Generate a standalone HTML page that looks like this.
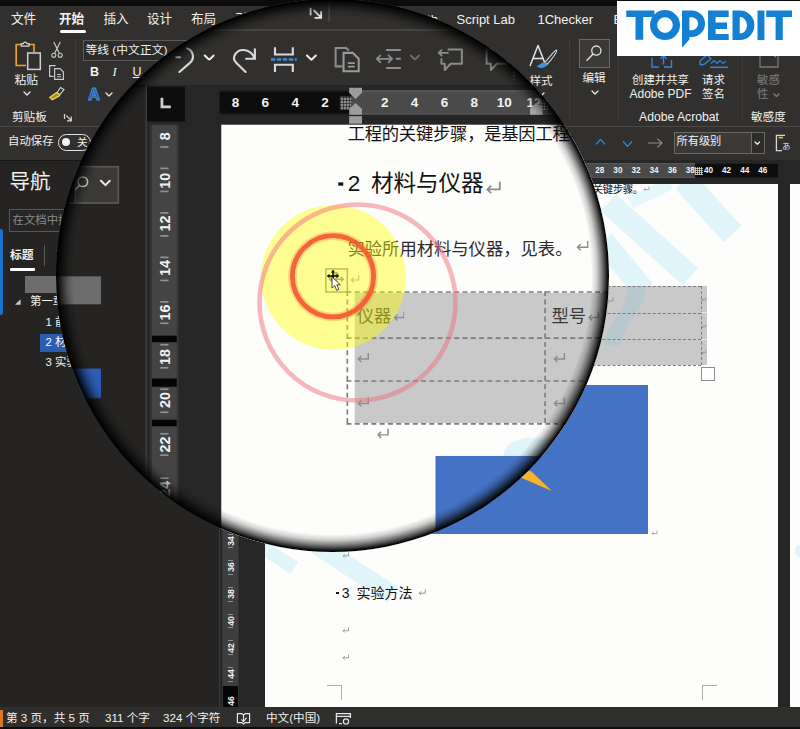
<!DOCTYPE html>
<html lang="zh-CN"><head><meta charset="utf-8"><title>Word - magnifier</title>
<style>
html,body{margin:0;padding:0;background:#262524;}
body{width:800px;height:729px;overflow:hidden;font-family:"Liberation Sans",sans-serif;}
.stage{position:relative;width:800px;height:729px;overflow:hidden;background:#262524;}
.ui{position:absolute;left:0;top:0;width:800px;height:729px;overflow:hidden;}
.b{position:absolute;display:block;box-sizing:border-box;}
.t{position:absolute;white-space:nowrap;display:block;}
.gt{color:#f1f1f1;font-family:"Liberation Sans","Noto Sans CJK SC",sans-serif;}
.rl{width:20px;text-align:center;font-size:8.2px;line-height:11px;color:#f2f2f2;font-weight:bold;}
.vl{width:20px;height:10px;text-align:center;font-size:8.7px;line-height:10px;color:#f2f2f2;font-weight:bold;transform:rotate(-90deg);}
.lens{position:absolute;left:56.0px;top:-1.0px;width:553.0px;height:553.0px;border-radius:50%;overflow:hidden;background:#262524;}
.lens .mag{position:absolute;left:-56.0px;top:1.0px;width:800px;height:729px;transform-origin:332.5px 275.5px;transform:scale(1.648);}
.rim{position:absolute;left:0;top:0;width:100%;height:100%;border-radius:50%;
 background:radial-gradient(circle closest-side, rgba(0,0,0,0) 0, rgba(0,0,0,0) 93.6%, rgba(0,0,0,.18) 95.6%, rgba(0,0,0,.46) 97.2%, rgba(0,0,0,.74) 98.6%, rgba(0,0,0,.93) 99.4%, #000 99.8%, #000 100%);}
</style></head>
<body>
<div class="stage">
<div class="ui">
<div class="b" style="left:0px;top:0px;width:800px;height:6px;background:#0b0b0b;"></div>
<div class="b" style="left:0px;top:6px;width:800px;height:154px;background:#31302e;"></div>
<div class="b" style="left:0px;top:126px;width:800px;height:1px;background:rgba(255,255,255,.12);"></div>
<div class="b" style="left:0px;top:160px;width:219px;height:548px;background:#252423;"></div>
<div class="b" style="left:0px;top:160px;width:800px;height:1.2px;background:#171717;"></div>
<div class="b" style="left:219px;top:160px;width:581px;height:548px;background:#262626;"></div>
<div class="b" style="left:219px;top:160px;width:1px;height:548px;background:#3a3a3a;"></div>
<span class="t gt" style="left:11px;top:12.44px;font-size:12.6px;line-height:15.12px;">文件</span>
<span class="t gt" style="left:103.5px;top:12.44px;font-size:12.6px;line-height:15.12px;">插入</span>
<span class="t gt" style="left:147px;top:12.44px;font-size:12.6px;line-height:15.12px;">设计</span>
<span class="t gt" style="left:191px;top:12.44px;font-size:12.6px;line-height:15.12px;">布局</span>
<span class="t gt" style="left:235px;top:12.44px;font-size:12.6px;line-height:15.12px;">引用</span>
<span class="t gt" style="left:279px;top:12.44px;font-size:12.6px;line-height:15.12px;">邮件</span>
<span class="t gt" style="left:323px;top:12.44px;font-size:12.6px;line-height:15.12px;">审阅</span>
<span class="t gt" style="left:367px;top:12.44px;font-size:12.6px;line-height:15.12px;">视图</span>
<span class="t gt" style="left:59px;top:12.44px;font-size:12.6px;line-height:15.12px;font-weight:bold;">开始</span>
<div class="b" style="left:59.5px;top:29.5px;width:26px;height:3px;background:#ffffff;border-radius:1.5px;"></div>
<span class="t" style="left:409px;top:12.2px;font-size:13px;line-height:15.6px;color:#f1f1f1;">Math</span>
<span class="t" style="left:456.5px;top:12.2px;font-size:13px;line-height:15.6px;color:#f1f1f1;">Script Lab</span>
<span class="t" style="left:537.5px;top:12.2px;font-size:13px;line-height:15.6px;color:#f1f1f1;">1Checker</span>
<span class="t" style="left:613.5px;top:12.2px;font-size:13px;line-height:15.6px;color:#f1f1f1;">Beautiful</span>
<svg class="b" style="left:13px;top:40px;" width="30" height="32" viewBox="0 0 30 32" fill="none"><path d="M9 4.5 H3.2 V25.5 H13" stroke="#e9a227" stroke-width="1.7"/><path d="M15 4.5 H21 V12" stroke="#e9a227" stroke-width="1.7"/><path d="M8.2 6.2 V3.6 H10.4 A1.8 1.8 0 0 1 13.9 3.6 H16 V6.2 Z" stroke="#d8d8d8" stroke-width="1.2" fill="#31302e"/><rect x="14.7" y="13" width="12.6" height="16.4" stroke="#d0d0d0" stroke-width="1.5" fill="#31302e"/></svg>
<span class="t gt" style="left:14.5px;top:72.92px;font-size:11.8px;line-height:14.16px;">粘贴</span>
<svg class="b" style="left:23.3px;top:91.1px;" width="8" height="5.0" viewBox="0 0 8 5.0" fill="none"><path d="M1 1 L4.0 4.0 L7 1" stroke="#e8e8e8" stroke-width="1.3" stroke-linecap="round" stroke-linejoin="round"/></svg>
<svg class="b" style="left:50px;top:41px;" width="14" height="18" viewBox="0 0 14 18" fill="none"><path d="M4 1.5 L9.3 12.2 M10 1.5 L4.7 12.2" stroke="#c9c9c9" stroke-width="1.2" stroke-linecap="round"/><circle cx="3.8" cy="14.2" r="2" stroke="#c9c9c9" stroke-width="1.1"/><circle cx="10.2" cy="14.2" r="2" stroke="#c9c9c9" stroke-width="1.1"/></svg>
<svg class="b" style="left:48px;top:64px;" width="18" height="17" viewBox="0 0 18 17" fill="none"><path d="M5.5 12.3 H1.6 V1.6 H7.6" stroke="#c9c9c9" stroke-width="1.2"/><path d="M6.6 4.6 H12 L15.4 8 V15.4 H6.6 Z" stroke="#c9c9c9" stroke-width="1.2"/><path d="M9 10.5 H13 M9 12.7 H13" stroke="#c9c9c9" stroke-width="1"/></svg>
<svg class="b" style="left:48px;top:86px;" width="18" height="16" viewBox="0 0 18 16" fill="none"><path d="M12.5 1.5 L16 3.6 L11.8 8.6 L9 6.8 Z" stroke="#d8d8d8" stroke-width="1.1"/><path d="M8.6 6.5 L12 8.8 L10.8 10.2 L4.2 13.6 L1.8 11.4 Z" stroke="#f0cf4a" stroke-width="1.3" fill="#f0cf4a" fill-opacity=".55"/></svg>
<span class="t gt" style="left:12px;top:110.04px;font-size:11.6px;line-height:13.92px;">剪贴板</span>
<svg class="b" style="left:62.5px;top:112.5px;" width="10" height="10" viewBox="0 0 10 10" fill="none"><path d="M1.5 1 V6 M3.4 2.6 L8 7.4 M8.2 3.6 V7.8 H4" stroke="#dedede" stroke-width="1.2"/></svg>
<div class="b" style="left:74.5px;top:40px;width:1px;height:82px;background:transparent;border-left:1px dotted rgba(255,255,255,.11);"></div>
<div class="b" style="left:83px;top:39.5px;width:118px;height:21px;background:#2b2a28;border:1px solid #5c5b59;"></div>
<span class="t gt" style="left:85.5px;top:43.22px;font-size:11.8px;line-height:14.16px;">等线 (中文正文)</span>
<span class="t" style="left:90px;top:64.8px;font-size:12.5px;line-height:15.0px;color:#f1f1f1;font-weight:bold;">B</span>
<span class="t" style="left:112.5px;top:64.8px;font-size:12.5px;line-height:15.0px;color:#f1f1f1;font-style:italic;font-family:'Liberation Serif',serif;">I</span>
<span class="t" style="left:132.6px;top:64.8px;font-size:12.5px;line-height:15.0px;color:#f1f1f1;text-decoration:underline;">U</span>
<span class="t" style="left:88.2px;top:84.6px;font-size:16px;line-height:19.2px;color:#33465e;font-weight:bold;-webkit-text-stroke:1.05px #2f92ec;text-shadow:0 0 1.5px rgba(70,160,250,.5);">A</span>
<svg class="b" style="left:105.0px;top:91.5px;" width="8" height="5.0" viewBox="0 0 8 5.0" fill="none"><path d="M1 1 L4.0 4.0 L7 1" stroke="#e8e8e8" stroke-width="1.3" stroke-linecap="round" stroke-linejoin="round"/></svg>
<svg class="b" style="left:317.9878640776699px;top:112.32281553398056px;" width="9" height="9" viewBox="0 0 9 9" fill="none"><path d="M1.2 1 V5.6 M3 2.4 L7.4 6.8 M7.6 3.2 V7.2 H3.6" stroke="#e4e4e4" stroke-width="1.1"/></svg>
<div class="b" style="left:329.5px;top:108px;width:1px;height:13px;background:rgba(255,255,255,.13);"></div>
<svg class="b" style="left:527px;top:42px;" width="32" height="28" viewBox="0 0 32 28" fill="none"><path d="M3 24 L11 3.5 L19 24 M6 16.5 H16" stroke="#e6e6e6" stroke-width="1.5" stroke-linejoin="round"/><path d="M29.6 8.2 C30.6 9.4 24.6 17.6 20 22.4 L18 20.6 C22 15.6 28.6 7.2 29.6 8.2 Z" stroke="#d6d6d6" stroke-width="1.1" stroke-linejoin="round"/><path d="M18.6 20.2 C14.5 19.8 12.6 23 9.5 24.6 C13.5 27 18.5 26.4 19.8 22.2 Z" fill="#3a96e8"/></svg>
<span class="t gt" style="left:529.5px;top:74.24px;font-size:11.6px;line-height:13.92px;">样式</span>
<svg class="b" style="left:537.0px;top:92.3px;" width="8" height="5.0" viewBox="0 0 8 5.0" fill="none"><path d="M1 1 L4.0 4.0 L7 1" stroke="#e8e8e8" stroke-width="1.3" stroke-linecap="round" stroke-linejoin="round"/></svg>
<svg class="b" style="left:465.69174757281553px;top:112.5px;" width="10" height="10" viewBox="0 0 10 10" fill="none"><path d="M1.5 1 V6 M3.4 2.6 L8 7.4 M8.2 3.6 V7.8 H4" stroke="#dedede" stroke-width="1.2"/></svg>
<div class="b" style="left:568.5px;top:40px;width:1px;height:82px;background:transparent;border-left:1px dotted rgba(255,255,255,.11);"></div>
<div class="b" style="left:579px;top:38.5px;width:30.5px;height:29.5px;background:#3b3a38;border:1px solid #6b6a68;"></div>
<svg class="b" style="left:584px;top:43px;" width="21" height="21" viewBox="0 0 21 21" fill="none"><circle cx="12.3" cy="7.6" r="4.6" stroke="#e2e2e2" stroke-width="1.3"/><path d="M9 11 L3 17.2" stroke="#e2e2e2" stroke-width="1.4" stroke-linecap="round"/></svg>
<span class="t gt" style="left:582.5px;top:71.34px;font-size:11.6px;line-height:13.92px;">编辑</span>
<svg class="b" style="left:591.0px;top:89.8px;" width="8" height="5.0" viewBox="0 0 8 5.0" fill="none"><path d="M1 1 L4.0 4.0 L7 1" stroke="#e8e8e8" stroke-width="1.3" stroke-linecap="round" stroke-linejoin="round"/></svg>
<div class="b" style="left:618px;top:40px;width:1px;height:82px;background:transparent;border-left:1px dotted rgba(255,255,255,.11);"></div>
<svg class="b" style="left:650px;top:52px;" width="24" height="17" viewBox="0 0 24 17" fill="none"><path d="M2 6 V15 H9 M14 15 H21.5 V8" stroke="#2f86e0" stroke-width="1.4"/><path d="M13.5 12.5 V4 M10.4 6.8 L13.5 3.6 L16.6 6.8" stroke="#2f86e0" stroke-width="1.4" stroke-linejoin="round"/></svg>
<svg class="b" style="left:698px;top:52px;" width="32" height="17" viewBox="0 0 32 17" fill="none"><path d="M2 9 L9 3 L13 6.5 L6 12.5 H2 Z" stroke="#2f86e0" stroke-width="1.3" stroke-linejoin="round"/><path d="M13 11.5 L16 8.5 L19 11.5 L22 8.5 L25 11.5 L28 9" stroke="#2f86e0" stroke-width="1.2"/><path d="M12 15.3 H30" stroke="#2f86e0" stroke-width="1.5"/></svg>
<span class="t gt" style="left:632px;top:74.16px;font-size:11.4px;line-height:13.68px;">创建并共享</span>
<span class="t" style="left:629.5px;top:87.4px;font-size:12px;line-height:14.4px;color:#f1f1f1;">Adobe PDF</span>
<span class="t gt" style="left:702px;top:74.16px;font-size:11.4px;line-height:13.68px;">请求</span>
<span class="t gt" style="left:702px;top:88.36px;font-size:11.4px;line-height:13.68px;">签名</span>
<span class="t" style="left:639px;top:109.68px;font-size:12.2px;line-height:14.64px;color:#f1f1f1;">Adobe Acrobat</span>
<div class="b" style="left:742px;top:40px;width:1px;height:82px;background:transparent;border-left:1px dotted rgba(255,255,255,.11);"></div>
<svg class="b" style="left:757px;top:47px;" width="24" height="22" viewBox="0 0 24 22" fill="none"><path d="M3 1 H21 V20 H3 Z" stroke="#777" stroke-width="1.3"/><path d="M9 2 L19 10 M12 1.5 L20 8" stroke="#8a8a8a" stroke-width="1.6"/></svg>
<span class="t gt" style="left:757px;top:74.16px;font-size:11.4px;line-height:13.68px;color:#7d7d7d;">敏感</span>
<span class="t gt" style="left:757px;top:87.76px;font-size:11.4px;line-height:13.68px;color:#7d7d7d;">性</span>
<svg class="b" style="left:772.5px;top:92.75px;" width="7" height="4.5" viewBox="0 0 7 4.5" fill="none"><path d="M1 1 L3.5 3.5 L6 1" stroke="#7d7d7d" stroke-width="1.3" stroke-linecap="round" stroke-linejoin="round"/></svg>
<span class="t gt" style="left:751px;top:110.04px;font-size:11.6px;line-height:13.92px;">敏感度</span>
<span class="t gt" style="left:8px;top:135.46px;font-size:11.4px;line-height:13.68px;">自动保存</span>
<div class="b" style="left:58px;top:133.5px;width:33px;height:17px;background:transparent;border:1.4px solid #e4e4e4;border-radius:9px;"></div>
<div class="b" style="left:62.2px;top:138px;width:8px;height:8px;background:#f2f2f2;border-radius:50%;"></div>
<span class="t gt" style="left:77px;top:135.9px;font-size:10.5px;line-height:12.6px;">关</span>
<svg class="b" style="left:235px;top:135.5px;" width="17" height="17" viewBox="0 0 17 17" fill="none"><path d="M2.2 7 H5.4" stroke="#d9d9d9" stroke-width="1.2"/><path d="M9.2 1.6 A5.2 5.2 0 0 1 10.6 10.8 L4.6 16" stroke="#d9d9d9" stroke-width="1.3" stroke-linecap="round"/></svg>
<svg class="b" style="left:254.0px;top:140.65px;" width="7.4" height="4.7" viewBox="0 0 7.4 4.7" fill="none"><path d="M1 1 L3.7 3.7 L6.4 1" stroke="#f0f0f0" stroke-width="1.2" stroke-linecap="round" stroke-linejoin="round"/></svg>
<svg class="b" style="left:269.5px;top:135.5px;" width="18" height="17" viewBox="0 0 18 17" fill="none"><path d="M15.4 1.8 V8 H9.6" stroke="#d9d9d9" stroke-width="1.3" stroke-linejoin="miter"/><path d="M15 7.6 C13.4 2.4 6.6 1 3.6 5 C2 7.4 3 9.4 4.2 10.6 L9.8 16" stroke="#d9d9d9" stroke-width="1.3" stroke-linecap="round"/></svg>
<svg class="b" style="left:294px;top:135.5px;" width="18" height="17" viewBox="0 0 18 17" fill="none"><path d="M3.6 1 V5.4 H14.4 V1" stroke="#d9d9d9" stroke-width="1.3"/><path d="M3.6 16 V11.6 H14.4 V16" stroke="#d9d9d9" stroke-width="1.3"/><path d="M1.2 8.4 H16.8" stroke="#3d8be0" stroke-width="1.5" stroke-dasharray="2.6 1"/></svg>
<svg class="b" style="left:316.3px;top:140.85px;" width="7.4" height="4.7" viewBox="0 0 7.4 4.7" fill="none"><path d="M1 1 L3.7 3.7 L6.4 1" stroke="#f0f0f0" stroke-width="1.2" stroke-linecap="round" stroke-linejoin="round"/></svg>
<svg class="b" style="left:332.5px;top:135.5px;" width="17" height="17" viewBox="0 0 17 17" fill="none"><path d="M5.4 12.6 H1.4 V1.4 H7.8 L9.4 3" stroke="#8b8b8b" stroke-width="1.25"/><path d="M6.2 4.4 H11.8 L15.4 8 V15.6 H6.2 Z" stroke="#9a9a9a" stroke-width="1.25"/><path d="M8.8 10.6 H13 M8.8 12.8 H13" stroke="#9a9a9a" stroke-width="1.1"/></svg>
<svg class="b" style="left:357.5px;top:136px;" width="17" height="16" viewBox="0 0 17 16" fill="none"><path d="M7 2.6 H16 M7 13.6 H16 M13 8 H16" stroke="#8b8b8b" stroke-width="1.2"/><path d="M1.4 8 H10.6 M3.8 5.6 L1.4 8 L3.8 10.4 M8.2 5.6 L10.6 8 L8.2 10.4" stroke="#8b8b8b" stroke-width="1.1"/></svg>
<svg class="b" style="left:379.0px;top:140.75px;" width="7" height="4.5" viewBox="0 0 7 4.5" fill="none"><path d="M1 1 L3.5 3.5 L6 1" stroke="#6e6e6e" stroke-width="1.1" stroke-linecap="round" stroke-linejoin="round"/></svg>
<svg class="b" style="left:395.5px;top:135.5px;" width="17" height="17" viewBox="0 0 17 17" fill="none"><path d="M6.4 2.4 H15 V11 H8.2 L4.6 14.8 V11 H2.6 V7.6" stroke="#8b8b8b" stroke-width="1.2" stroke-linejoin="round"/><path d="M1 4.4 H7 M3 2.4 L1 4.4 L3 6.4" stroke="#8b8b8b" stroke-width="1.1"/></svg>
<svg class="b" style="left:423.5px;top:135.5px;" width="17" height="17" viewBox="0 0 17 17" fill="none"><path d="M2 2.4 H15 V11 H8.2 L4.6 14.8 V11 H2 Z" stroke="#8b8b8b" stroke-width="1.2" stroke-linejoin="round"/><path d="M9 0.8 H13" stroke="#8b8b8b" stroke-width="1.1"/></svg>
<div class="b" style="left:442.3px;top:131px;width:1px;height:26px;background:transparent;border-left:1px dotted rgba(255,255,255,.2);"></div>
<svg class="b" style="left:594.5px;top:138px;" width="11" height="8" viewBox="0 0 11 8" fill="none"><path d="M1 6.4 L5.5 1.4 L10 6.4" stroke="#2f8fe8" stroke-width="1.3" stroke-linejoin="round"/></svg>
<svg class="b" style="left:621.5px;top:140px;" width="11" height="8" viewBox="0 0 11 8" fill="none"><path d="M1 1.4 L5.5 6.4 L10 1.4" stroke="#2f8fe8" stroke-width="1.3" stroke-linejoin="round"/></svg>
<svg class="b" style="left:647px;top:137px;" width="17" height="12" viewBox="0 0 17 12" fill="none"><path d="M1 6 H15 M10.4 1.6 L15 6 L10.4 10.4" stroke="#8d8d8d" stroke-width="1.2"/></svg>
<div class="b" style="left:674px;top:131.5px;width:77px;height:22.5px;background:#3a3938;border:1px solid #6a6a68;border-right:none;"></div>
<div class="b" style="left:750.5px;top:131.5px;width:14px;height:22.5px;background:#2d2c2a;border:1px solid #6a6a68;"></div>
<span class="t gt" style="left:676.5px;top:135.28px;font-size:11.2px;line-height:13.44px;">所有级别</span>
<svg class="b" style="left:754.2px;top:140.85px;" width="6.6" height="4.3" viewBox="0 0 6.6 4.3" fill="none"><path d="M1 1 L3.3 3.3 L5.6 1" stroke="#f0f0f0" stroke-width="1.2" stroke-linecap="round" stroke-linejoin="round"/></svg>
<svg class="b" style="left:774px;top:134px;" width="18" height="19" viewBox="0 0 18 19" fill="none"><path d="M11 1.4 H2.4 V16.6 H8" stroke="#d8d8d8" stroke-width="1.3"/><path d="M4.6 3.6 H9" stroke="#e8c240" stroke-width="1.6"/></svg>
<span class="t gt" style="left:782px;top:141.4px;font-size:8.5px;line-height:10.2px;color:#d8d8d8;">あ</span>
<div class="b" style="left:0px;top:229px;width:3px;height:86px;background:#1d73c9;border-radius:0 3px 3px 0;"></div>
<span class="t gt" style="left:9.5px;top:170.14px;font-size:20.6px;line-height:24.72px;">导航</span>
<div class="b" style="left:9px;top:208.5px;width:194px;height:23.5px;background:#262524;border:1px solid #585755;"></div>
<div class="b" style="left:176px;top:208.5px;width:27px;height:23.5px;background:#3a3937;border:1px solid #585755;"></div>
<span class="t gt" style="left:12.5px;top:213.66px;font-size:11.4px;line-height:13.68px;color:#8b8b8b;">在文档中搜索</span>
<svg class="b" style="left:174.5px;top:212.5px;" width="12" height="12" viewBox="0 0 12 12" fill="none"><circle cx="6" cy="5.6" r="2.9" stroke="#cfcfcf" stroke-width="1"/><path d="M3.9 7.8 L1.4 10.6" stroke="#cfcfcf" stroke-width="1.1"/></svg>
<svg class="b" style="left:190.60000000000002px;top:217.25px;" width="7.4" height="4.7" viewBox="0 0 7.4 4.7" fill="none"><path d="M1 1 L3.7 3.7 L6.4 1" stroke="#ececec" stroke-width="1.2" stroke-linecap="round" stroke-linejoin="round"/></svg>
<span class="t gt" style="left:10px;top:247.92px;font-size:11.8px;line-height:14.16px;font-weight:bold;">标题</span>
<div class="b" style="left:10px;top:268px;width:24.5px;height:2.6px;background:#ffffff;border-radius:1px;"></div>
<div class="b" style="left:44px;top:245px;width:1px;height:21px;background:#5a5a5a;"></div>
<span class="t gt" style="left:56px;top:247.92px;font-size:11.8px;line-height:14.16px;">页面</span>
<span class="t gt" style="left:102px;top:247.92px;font-size:11.8px;line-height:14.16px;">结果</span>
<div class="b" style="left:24.5px;top:275.5px;width:167.5px;height:17px;background:#6c6c6c;"></div>
<svg class="b" style="left:14px;top:297.5px;" width="8" height="8" viewBox="0 0 8 8" fill="none"><path d="M6.6 1.2 V6.8 H1 Z" fill="#c8c8c8"/></svg>
<span class="t gt" style="left:30px;top:295.16px;font-size:11.4px;line-height:13.68px;">第一章 绪论</span>
<span class="t gt" style="left:45.5px;top:316.16px;font-size:11.4px;line-height:13.68px;">1 前言</span>
<div class="b" style="left:40px;top:334px;width:151.5px;height:18.4px;background:#2b5db3;"></div>
<span class="t gt" style="left:45.5px;top:336.36px;font-size:11.4px;line-height:13.68px;color:#ffffff;">2 材料与仪器</span>
<span class="t gt" style="left:45.5px;top:356.16px;font-size:11.4px;line-height:13.68px;">3 实验方法</span>
<div class="b" style="left:219.5px;top:161px;width:23px;height:20.5px;background:#0c0c0c;"></div>
<svg class="b" style="left:226.8px;top:167.2px;" width="9" height="9" viewBox="0 0 9 9" fill="none"><path d="M2 0.6 V6.2 H7.4" stroke="#cdcdcd" stroke-width="1.7"/></svg>
<div class="b" style="left:263.5px;top:163px;width:514.5px;height:15.4px;background:#0c0c0c;"></div>
<div class="b" style="left:343.7px;top:163px;width:351.3px;height:15.4px;background:#4a4a4a;"></div>
<div class="b" style="left:263.5px;top:163px;width:514.5px;height:15.4px;background:transparent;border-top:1px solid rgba(255,255,255,.08);border-bottom:1px solid rgba(255,255,255,.06);"></div>
<div class="b" style="left:337.2px;top:167.2px;width:6.5px;height:7.6px;background:#8a8a8a;background-image:repeating-linear-gradient(0deg,rgba(0,0,0,.45) 0 .6px,transparent .6px 1.8px),repeating-linear-gradient(90deg,rgba(0,0,0,.45) 0 .6px,transparent .6px 1.8px);"></div>
<div class="b" style="left:695.4px;top:166.6px;width:7.6px;height:8.4px;background:transparent;background-image:repeating-linear-gradient(0deg,rgba(225,225,225,.75) 0 .7px,transparent .7px 2.1px),repeating-linear-gradient(90deg,rgba(225,225,225,.75) 0 .7px,transparent .7px 2.1px);"></div>
<span class="t rl" style="left:317.98px;top:165.2px;">2</span>
<span class="t rl" style="left:299.86px;top:165.2px;">4</span>
<span class="t rl" style="left:281.74px;top:165.2px;">6</span>
<span class="t rl" style="left:263.62px;top:165.2px;">8</span>
<span class="t rl" style="left:354.22px;top:165.2px;">2</span>
<span class="t rl" style="left:372.34px;top:165.2px;">4</span>
<span class="t rl" style="left:390.46px;top:165.2px;">6</span>
<span class="t rl" style="left:408.58px;top:165.2px;">8</span>
<span class="t rl" style="left:426.7px;top:165.2px;">10</span>
<span class="t rl" style="left:444.82px;top:165.2px;">12</span>
<span class="t rl" style="left:462.94px;top:165.2px;">14</span>
<span class="t rl" style="left:481.06px;top:165.2px;">16</span>
<span class="t rl" style="left:499.18px;top:165.2px;">18</span>
<span class="t rl" style="left:517.3px;top:165.2px;">20</span>
<span class="t rl" style="left:535.42px;top:165.2px;">22</span>
<span class="t rl" style="left:553.54px;top:165.2px;">24</span>
<span class="t rl" style="left:571.66px;top:165.2px;">26</span>
<span class="t rl" style="left:589.78px;top:165.2px;">28</span>
<span class="t rl" style="left:607.9px;top:165.2px;">30</span>
<span class="t rl" style="left:626.02px;top:165.2px;">32</span>
<span class="t rl" style="left:644.14px;top:165.2px;">34</span>
<span class="t rl" style="left:662.26px;top:165.2px;">36</span>
<span class="t rl" style="left:680.38px;top:165.2px;">38</span>
<span class="t rl" style="left:698.5px;top:165.2px;">40</span>
<span class="t rl" style="left:716.62px;top:165.2px;">42</span>
<span class="t rl" style="left:734.74px;top:165.2px;">44</span>
<span class="t rl" style="left:752.86px;top:165.2px;">46</span>
<svg class="b" style="left:341.6px;top:160.6px;" width="9" height="24" viewBox="0 0 9 24" fill="none"><path d="M0.6 0.6 H8.4 V3.6 L4.5 7.4 L0.6 3.6 Z" fill="#9c9c9c"/><path d="M4.5 9.8 L8.4 13.4 V17 H0.6 V13.4 Z" fill="#9c9c9c"/><rect x="0.6" y="17.8" width="7.8" height="4.6" fill="#9c9c9c"/></svg>
<div class="b" style="left:457.4px;top:168.6px;width:5.6px;height:6.6px;background:transparent;background-image:repeating-linear-gradient(0deg,rgba(225,225,225,.6) 0 .6px,transparent .6px 1.8px),repeating-linear-gradient(90deg,rgba(225,225,225,.6) 0 .6px,transparent .6px 1.8px);"></div>
<svg class="b" style="left:451.5830097087379px;top:170.4px;" width="8.8" height="8.4" viewBox="0 0 8.8 8.4" fill="none"><path d="M4.4 0.6 L8.4 4.2 V8 H0.4 V4.2 Z" fill="#a6a6a6"/></svg>
<div class="b" style="left:221.6px;top:184.3px;width:17px;height:523.2px;background:#3e3e3e;border-left:1px solid #333;border-right:1px solid #333;"></div>
<div class="b" style="left:222.6px;top:311.29999999999995px;width:15px;height:4.2px;background:#050505;"></div>
<div class="b" style="left:222.6px;top:337.9px;width:15px;height:4.2px;background:#050505;"></div>
<div class="b" style="left:222.6px;top:362.29999999999995px;width:15px;height:4.2px;background:#050505;"></div>
<div class="b" style="left:222.6px;top:685.5px;width:15px;height:22px;background:#050505;"></div>
<span class="t vl" style="left:220.6px;top:188.06px;">8</span>
<div class="b" style="left:227.8px;top:185.91px;width:5.6px;height:0.7px;background:rgba(255,255,255,.42);"></div>
<div class="b" style="left:227.8px;top:199.51px;width:5.6px;height:0.7px;background:rgba(255,255,255,.42);"></div>
<span class="t vl" style="left:220.6px;top:214.8px;">10</span>
<div class="b" style="left:227.8px;top:212.65px;width:5.6px;height:0.7px;background:rgba(255,255,255,.42);"></div>
<div class="b" style="left:227.8px;top:226.25px;width:5.6px;height:0.7px;background:rgba(255,255,255,.42);"></div>
<span class="t vl" style="left:220.6px;top:241.54px;">12</span>
<div class="b" style="left:227.8px;top:239.39px;width:5.6px;height:0.7px;background:rgba(255,255,255,.42);"></div>
<div class="b" style="left:227.8px;top:252.99px;width:5.6px;height:0.7px;background:rgba(255,255,255,.42);"></div>
<span class="t vl" style="left:220.6px;top:268.28px;">14</span>
<div class="b" style="left:227.8px;top:266.13px;width:5.6px;height:0.7px;background:rgba(255,255,255,.42);"></div>
<div class="b" style="left:227.8px;top:279.73px;width:5.6px;height:0.7px;background:rgba(255,255,255,.42);"></div>
<span class="t vl" style="left:220.6px;top:295.02px;">16</span>
<div class="b" style="left:227.8px;top:292.87px;width:5.6px;height:0.7px;background:rgba(255,255,255,.42);"></div>
<div class="b" style="left:227.8px;top:306.47px;width:5.6px;height:0.7px;background:rgba(255,255,255,.42);"></div>
<span class="t vl" style="left:220.6px;top:321.76px;">18</span>
<div class="b" style="left:227.8px;top:319.61px;width:5.6px;height:0.7px;background:rgba(255,255,255,.42);"></div>
<div class="b" style="left:227.8px;top:333.21px;width:5.6px;height:0.7px;background:rgba(255,255,255,.42);"></div>
<span class="t vl" style="left:220.6px;top:348.5px;">20</span>
<div class="b" style="left:227.8px;top:346.35px;width:5.6px;height:0.7px;background:rgba(255,255,255,.42);"></div>
<div class="b" style="left:227.8px;top:359.95px;width:5.6px;height:0.7px;background:rgba(255,255,255,.42);"></div>
<span class="t vl" style="left:220.6px;top:375.24px;">22</span>
<div class="b" style="left:227.8px;top:373.09px;width:5.6px;height:0.7px;background:rgba(255,255,255,.42);"></div>
<div class="b" style="left:227.8px;top:386.69px;width:5.6px;height:0.7px;background:rgba(255,255,255,.42);"></div>
<span class="t vl" style="left:220.6px;top:401.98px;">24</span>
<div class="b" style="left:227.8px;top:399.83px;width:5.6px;height:0.7px;background:rgba(255,255,255,.42);"></div>
<div class="b" style="left:227.8px;top:413.43px;width:5.6px;height:0.7px;background:rgba(255,255,255,.42);"></div>
<span class="t vl" style="left:220.6px;top:428.72px;">26</span>
<div class="b" style="left:227.8px;top:426.57px;width:5.6px;height:0.7px;background:rgba(255,255,255,.42);"></div>
<div class="b" style="left:227.8px;top:440.17px;width:5.6px;height:0.7px;background:rgba(255,255,255,.42);"></div>
<span class="t vl" style="left:220.6px;top:455.46px;">28</span>
<div class="b" style="left:227.8px;top:453.31px;width:5.6px;height:0.7px;background:rgba(255,255,255,.42);"></div>
<div class="b" style="left:227.8px;top:466.91px;width:5.6px;height:0.7px;background:rgba(255,255,255,.42);"></div>
<span class="t vl" style="left:220.6px;top:482.2px;">30</span>
<div class="b" style="left:227.8px;top:480.05px;width:5.6px;height:0.7px;background:rgba(255,255,255,.42);"></div>
<div class="b" style="left:227.8px;top:493.65px;width:5.6px;height:0.7px;background:rgba(255,255,255,.42);"></div>
<span class="t vl" style="left:220.6px;top:508.94px;">32</span>
<div class="b" style="left:227.8px;top:506.79px;width:5.6px;height:0.7px;background:rgba(255,255,255,.42);"></div>
<div class="b" style="left:227.8px;top:520.39px;width:5.6px;height:0.7px;background:rgba(255,255,255,.42);"></div>
<span class="t vl" style="left:220.6px;top:535.68px;">34</span>
<div class="b" style="left:227.8px;top:533.53px;width:5.6px;height:0.7px;background:rgba(255,255,255,.42);"></div>
<div class="b" style="left:227.8px;top:547.13px;width:5.6px;height:0.7px;background:rgba(255,255,255,.42);"></div>
<span class="t vl" style="left:220.6px;top:562.42px;">36</span>
<div class="b" style="left:227.8px;top:560.27px;width:5.6px;height:0.7px;background:rgba(255,255,255,.42);"></div>
<div class="b" style="left:227.8px;top:573.87px;width:5.6px;height:0.7px;background:rgba(255,255,255,.42);"></div>
<span class="t vl" style="left:220.6px;top:589.16px;">38</span>
<div class="b" style="left:227.8px;top:587.01px;width:5.6px;height:0.7px;background:rgba(255,255,255,.42);"></div>
<div class="b" style="left:227.8px;top:600.61px;width:5.6px;height:0.7px;background:rgba(255,255,255,.42);"></div>
<span class="t vl" style="left:220.6px;top:615.9px;">40</span>
<div class="b" style="left:227.8px;top:613.75px;width:5.6px;height:0.7px;background:rgba(255,255,255,.42);"></div>
<div class="b" style="left:227.8px;top:627.35px;width:5.6px;height:0.7px;background:rgba(255,255,255,.42);"></div>
<span class="t vl" style="left:220.6px;top:642.64px;">42</span>
<div class="b" style="left:227.8px;top:640.49px;width:5.6px;height:0.7px;background:rgba(255,255,255,.42);"></div>
<div class="b" style="left:227.8px;top:654.09px;width:5.6px;height:0.7px;background:rgba(255,255,255,.42);"></div>
<span class="t vl" style="left:220.6px;top:669.38px;">44</span>
<div class="b" style="left:227.8px;top:667.23px;width:5.6px;height:0.7px;background:rgba(255,255,255,.42);"></div>
<div class="b" style="left:227.8px;top:680.83px;width:5.6px;height:0.7px;background:rgba(255,255,255,.42);"></div>
<span class="t vl" style="left:220.6px;top:696.12px;">46</span>
<div class="b" style="left:264.6px;top:184.2px;width:513.4px;height:523.3px;background:#fdfdfc;"></div>
<div class="b" style="left:790px;top:184.2px;width:10px;height:523.3px;background:#fdfdfc;"></div>
<svg class="b" style="left:264.6px;top:184.2px;" width="513.4" height="523.3" viewBox="264.6 184.2 513.4 523.3" fill="none"><polygon points="675.1,189.1 723.1,242.1 740.9,225.9 692.9,172.9" fill="#dff5f9"/><polygon points="632.6,208.4 672.6,189.4 667.4,178.6 627.4,197.6" fill="#dff5f9" fill-opacity=".8"/><polygon points="600.3,211.5 682.3,285.5 697.7,268.5 615.7,194.5" fill="#dff5f9"/><polygon points="594.5,248.0 635.5,298.0 652.5,284.0 611.5,234.0" fill="#dff5f9"/><polygon points="254.2,550.9 290.2,573.9 297.8,562.1 261.8,539.1" fill="#dff5f9"/><polygon points="310.8,552.9 386.8,602.9 397.2,587.1 321.2,537.1" fill="#dff5f9"/><ellipse cx="455" cy="384" rx="19" ry="10" fill="#dff5f9"/></svg>
<div class="b" style="left:794.5px;top:545px;width:8px;height:12px;background:#dff5f9;border-radius:50%;"></div>
<span class="t gt" style="left:341.7px;top:182.9px;font-size:10.5px;line-height:12.6px;letter-spacing:-0.14px;color:#111;">工程的关键步骤，是基因工程中的</span>
<span class="t gt" style="left:582.5px;top:182.9px;font-size:10.5px;line-height:12.6px;letter-spacing:-0.45px;color:#111;">的关键步骤。</span>
<svg class="b" style="left:643.2px;top:186.4px;" width="6.65" height="5.6" viewBox="0 0 9.5 8" fill="none"><path d="M8.6 0.6 V5 H1.4 M3.6 2.8 L1.4 5 L3.6 7.2" stroke="#8c8c8c" stroke-width="1.05"/></svg>
<div class="b" style="left:336.4px;top:218.7px;width:2.8px;height:2.8px;background:#111;"></div>
<span class="t" style="left:341.8px;top:211.68px;font-size:13.7px;line-height:16.44px;color:#111;">2</span>
<span class="t gt" style="left:355.8px;top:211.68px;font-size:13.7px;line-height:16.44px;color:#111;">材料与仪器</span>
<svg class="b" style="left:425.4px;top:217.6px;" width="9.97" height="8.4" viewBox="0 0 9.5 8" fill="none"><path d="M8.6 0.6 V5 H1.4 M3.6 2.8 L1.4 5 L3.6 7.2" stroke="#8c8c8c" stroke-width="1.05"/></svg>
<span class="t gt" style="left:341.6px;top:252.6px;font-size:10.5px;line-height:12.6px;color:#2a2a2a;">实验所用材料与仪器，见表。</span>
<svg class="b" style="left:479.6px;top:254.46px;" width="8.17" height="6.88" viewBox="0 0 9.5 8" fill="none"><path d="M8.6 0.6 V5 H1.4 M3.6 2.8 L1.4 5 L3.6 7.2" stroke="#8c8c8c" stroke-width="1.05"/></svg>
<div class="b" style="left:327.8px;top:270.9px;width:14.7px;height:14.7px;background:#fbfbfb;border:1.1px solid #9a9a9a;"></div>
<svg class="b" style="left:330.3px;top:273.4px;" width="9.6" height="9.6" viewBox="0 0 9.6 9.6" fill="none"><path d="M4.8 0.6 V9 M0.6 4.8 H9" stroke="#8a8a8a" stroke-width="1"/><path d="M3.4 2 L4.8 0.6 L6.2 2 M3.4 7.6 L4.8 9 L6.2 7.6 M2 3.4 L0.6 4.8 L2 6.2 M7.6 3.4 L9 4.8 L7.6 6.2" stroke="#8a8a8a" stroke-width=".9"/></svg>
<svg class="b" style="left:343px;top:275.04px;" width="6.08" height="5.12" viewBox="0 0 9.5 8" fill="none"><path d="M8.6 0.6 V5 H1.4 M3.6 2.8 L1.4 5 L3.6 7.2" stroke="#a0a0a0" stroke-width="1.05"/></svg>
<div class="b" style="left:346.2px;top:286.2px;width:354.4px;height:78.8px;background:#c9c9c9;"></div>
<div class="b" style="left:700.6px;top:286.2px;width:6.2px;height:78.8px;background:#c9c9c9;"></div>
<svg class="b" style="left:600px;top:286.2px;" width="60" height="78.8" viewBox="0 0 60 78.8" fill="none"><path d="M27 0 H46 C46 12 40 22 33 32 C27 41 22 50 20 60 L4 60 C6 46 12 36 19 27 C24 20 27 10 27 0 Z" fill="#b7c8cf"/></svg>
<div class="b" style="left:341.4px;top:285.6px;width:359.20000000000005px;height:0px;background:transparent;border-top:1px dashed #7c7c7c;"></div>
<div class="b" style="left:341.4px;top:312.5px;width:359.20000000000005px;height:0px;background:transparent;border-top:1px dashed #7c7c7c;"></div>
<div class="b" style="left:341.4px;top:339.3px;width:359.20000000000005px;height:0px;background:transparent;border-top:1px dashed #7c7c7c;"></div>
<div class="b" style="left:341.4px;top:364.9px;width:359.20000000000005px;height:0px;background:transparent;border-top:1px dashed #7c7c7c;"></div>
<div class="b" style="left:341.4px;top:285.6px;width:0px;height:79.29999999999995px;background:transparent;border-left:1px dashed #7c7c7c;"></div>
<div class="b" style="left:461.4px;top:285.6px;width:0px;height:79.29999999999995px;background:transparent;border-left:1px dashed #7c7c7c;"></div>
<div class="b" style="left:581.2px;top:285.6px;width:0px;height:79.29999999999995px;background:transparent;border-left:1px dashed #7c7c7c;"></div>
<div class="b" style="left:700.6px;top:285.6px;width:0px;height:79.29999999999995px;background:transparent;border-left:1px dashed #7c7c7c;"></div>
<div class="b" style="left:700.6px;top:312.2px;width:6.2px;height:1.2px;background:#e6e6e6;"></div>
<div class="b" style="left:700.6px;top:339px;width:6.2px;height:1.2px;background:#e6e6e6;"></div>
<span class="t gt" style="left:347.2px;top:293.8px;font-size:10.5px;line-height:12.6px;color:#3a3a3a;">仪器</span>
<svg class="b" style="left:368.8px;top:297.4px;" width="7.6" height="6.4" viewBox="0 0 9.5 8" fill="none"><path d="M8.6 0.6 V5 H1.4 M3.6 2.8 L1.4 5 L3.6 7.2" stroke="#8c8c8c" stroke-width="1.05"/></svg>
<span class="t gt" style="left:465.4px;top:293.8px;font-size:10.5px;line-height:12.6px;color:#3a3a3a;">型号</span>
<svg class="b" style="left:487.2px;top:297.4px;" width="7.6" height="6.4" viewBox="0 0 9.5 8" fill="none"><path d="M8.6 0.6 V5 H1.4 M3.6 2.8 L1.4 5 L3.6 7.2" stroke="#8c8c8c" stroke-width="1.05"/></svg>
<span class="t gt" style="left:585.4px;top:293.8px;font-size:10.5px;line-height:12.6px;color:#3a3a3a;">厂家</span>
<svg class="b" style="left:606px;top:297.4px;" width="7.6" height="6.4" viewBox="0 0 9.5 8" fill="none"><path d="M8.6 0.6 V5 H1.4 M3.6 2.8 L1.4 5 L3.6 7.2" stroke="#8c8c8c" stroke-width="1.05"/></svg>
<svg class="b" style="left:347.4px;top:322.44px;" width="7.98" height="6.72" viewBox="0 0 9.5 8" fill="none"><path d="M8.6 0.6 V5 H1.4 M3.6 2.8 L1.4 5 L3.6 7.2" stroke="#8c8c8c" stroke-width="1.05"/></svg>
<svg class="b" style="left:466.2px;top:322.44px;" width="7.98" height="6.72" viewBox="0 0 9.5 8" fill="none"><path d="M8.6 0.6 V5 H1.4 M3.6 2.8 L1.4 5 L3.6 7.2" stroke="#8c8c8c" stroke-width="1.05"/></svg>
<svg class="b" style="left:586px;top:322.44px;" width="7.98" height="6.72" viewBox="0 0 9.5 8" fill="none"><path d="M8.6 0.6 V5 H1.4 M3.6 2.8 L1.4 5 L3.6 7.2" stroke="#8c8c8c" stroke-width="1.05"/></svg>
<svg class="b" style="left:347.4px;top:348.64px;" width="7.98" height="6.72" viewBox="0 0 9.5 8" fill="none"><path d="M8.6 0.6 V5 H1.4 M3.6 2.8 L1.4 5 L3.6 7.2" stroke="#8c8c8c" stroke-width="1.05"/></svg>
<svg class="b" style="left:466.2px;top:348.64px;" width="7.98" height="6.72" viewBox="0 0 9.5 8" fill="none"><path d="M8.6 0.6 V5 H1.4 M3.6 2.8 L1.4 5 L3.6 7.2" stroke="#8c8c8c" stroke-width="1.05"/></svg>
<svg class="b" style="left:586px;top:348.64px;" width="7.98" height="6.72" viewBox="0 0 9.5 8" fill="none"><path d="M8.6 0.6 V5 H1.4 M3.6 2.8 L1.4 5 L3.6 7.2" stroke="#8c8c8c" stroke-width="1.05"/></svg>
<svg class="b" style="left:701.2px;top:296.76px;" width="5.32" height="4.48" viewBox="0 0 9.5 8" fill="none"><path d="M8.6 0.6 V5 H1.4 M3.6 2.8 L1.4 5 L3.6 7.2" stroke="#777" stroke-width="1.05"/></svg>
<svg class="b" style="left:701.2px;top:323.76px;" width="5.32" height="4.48" viewBox="0 0 9.5 8" fill="none"><path d="M8.6 0.6 V5 H1.4 M3.6 2.8 L1.4 5 L3.6 7.2" stroke="#777" stroke-width="1.05"/></svg>
<svg class="b" style="left:701.2px;top:350.16px;" width="5.32" height="4.48" viewBox="0 0 9.5 8" fill="none"><path d="M8.6 0.6 V5 H1.4 M3.6 2.8 L1.4 5 L3.6 7.2" stroke="#777" stroke-width="1.05"/></svg>
<div class="b" style="left:700.8px;top:367.2px;width:14px;height:13.4px;background:#ffffff;border:1px solid #8e8e8e;"></div>
<svg class="b" style="left:358.6px;top:368.44px;" width="7.98" height="6.72" viewBox="0 0 9.5 8" fill="none"><path d="M8.6 0.6 V5 H1.4 M3.6 2.8 L1.4 5 L3.6 7.2" stroke="#8c8c8c" stroke-width="1.05"/></svg>
<div class="b" style="left:394.6px;top:384.6px;width:253.6px;height:149.6px;background:#4472c4;"></div>
<svg class="b" style="left:500px;top:460px;" width="60" height="40" viewBox="0 0 60 40" fill="none"><path d="M8 12 L31 11 L51.8 31 L23.5 18.8 Z" fill="#f7b32b"/></svg>
<svg class="b" style="left:651px;top:529.6px;" width="6.65" height="5.6" viewBox="0 0 9.5 8" fill="none"><path d="M8.6 0.6 V5 H1.4 M3.6 2.8 L1.4 5 L3.6 7.2" stroke="#8c8c8c" stroke-width="1.05"/></svg>
<svg class="b" style="left:341.6px;top:551.56px;" width="7.22" height="6.08" viewBox="0 0 9.5 8" fill="none"><path d="M8.6 0.6 V5 H1.4 M3.6 2.8 L1.4 5 L3.6 7.2" stroke="#8c8c8c" stroke-width="1.05"/></svg>
<div class="b" style="left:336.2px;top:591.8px;width:2.6px;height:2.6px;background:#111;"></div>
<span class="t" style="left:341.8px;top:585.2px;font-size:14.0px;line-height:16.8px;color:#111;">3</span>
<span class="t gt" style="left:356.4px;top:585.2px;font-size:14.0px;line-height:16.8px;color:#111;">实验方法</span>
<svg class="b" style="left:418.2px;top:589.04px;" width="7.98" height="6.72" viewBox="0 0 9.5 8" fill="none"><path d="M8.6 0.6 V5 H1.4 M3.6 2.8 L1.4 5 L3.6 7.2" stroke="#8c8c8c" stroke-width="1.05"/></svg>
<svg class="b" style="left:341.6px;top:627.16px;" width="7.22" height="6.08" viewBox="0 0 9.5 8" fill="none"><path d="M8.6 0.6 V5 H1.4 M3.6 2.8 L1.4 5 L3.6 7.2" stroke="#8c8c8c" stroke-width="1.05"/></svg>
<svg class="b" style="left:341.6px;top:654.16px;" width="7.22" height="6.08" viewBox="0 0 9.5 8" fill="none"><path d="M8.6 0.6 V5 H1.4 M3.6 2.8 L1.4 5 L3.6 7.2" stroke="#8c8c8c" stroke-width="1.05"/></svg>
<div class="b" style="left:327.4px;top:685.4px;width:15px;height:15px;background:transparent;border-top:1px solid #adadad;border-right:1px solid #adadad;"></div>
<div class="b" style="left:702px;top:685.4px;width:15px;height:15px;background:transparent;border-top:1px solid #adadad;border-left:1px solid #adadad;"></div>
<div class="b" style="left:0px;top:707px;width:800px;height:22px;background:#2f2e2c;"></div>
<div class="b" style="left:0px;top:726.6px;width:800px;height:2.4px;background:#0d0d0d;"></div>
<div class="b" style="left:0px;top:709.5px;width:3px;height:17.2px;background:#d9782a;"></div>
<span class="t gt" style="left:6px;top:711.24px;font-size:11.6px;line-height:13.92px;">第 3 页，共 5 页</span>
<span class="t gt" style="left:105px;top:711.24px;font-size:11.6px;line-height:13.92px;">311 个字</span>
<span class="t gt" style="left:163px;top:711.24px;font-size:11.6px;line-height:13.92px;">324 个字符</span>
<svg class="b" style="left:235.5px;top:711.5px;" width="15" height="14" viewBox="0 0 15 14" fill="none"><path d="M1.4 1.6 H5.6 L7.5 3 L9.4 1.6 H13.6 V10.6 H9.4 L7.5 12 L5.6 10.6 H1.4 Z" stroke="#e8e8e8" stroke-width="1.2" stroke-linejoin="round"/><path d="M7.5 3 V9 M5.4 7.4 L7.5 9.6 L10.6 5.6" stroke="#e8e8e8" stroke-width="1.1"/></svg>
<span class="t gt" style="left:266px;top:711.24px;font-size:11.6px;line-height:13.92px;">中文(中国)</span>
<svg class="b" style="left:335px;top:711.5px;" width="17" height="14" viewBox="0 0 17 14" fill="none"><path d="M1.4 11.6 V1.6 H15.4 V6" stroke="#e8e8e8" stroke-width="1.3"/><path d="M1.4 4.4 H15.4" stroke="#e8e8e8" stroke-width="1.2"/><circle cx="11" cy="9.4" r="2.6" stroke="#e8e8e8" stroke-width="1.2"/><path d="M4 11.6 H7" stroke="#e8e8e8" stroke-width="1.2"/></svg>
</div>
<div class="lens">
<div class="mag"><div class="ui">
<div class="b" style="left:0px;top:0px;width:800px;height:6px;background:#0b0b0b;"></div>
<div class="b" style="left:0px;top:6px;width:800px;height:154px;background:#31302e;"></div>
<div class="b" style="left:0px;top:126px;width:800px;height:1px;background:rgba(255,255,255,.12);"></div>
<div class="b" style="left:0px;top:160px;width:219px;height:548px;background:#252423;"></div>
<div class="b" style="left:0px;top:160px;width:800px;height:1.2px;background:#171717;"></div>
<div class="b" style="left:219px;top:160px;width:581px;height:548px;background:#262626;"></div>
<div class="b" style="left:219px;top:160px;width:1px;height:548px;background:#3a3a3a;"></div>
<span class="t gt" style="left:11px;top:12.44px;font-size:12.6px;line-height:15.12px;">文件</span>
<span class="t gt" style="left:103.5px;top:12.44px;font-size:12.6px;line-height:15.12px;">插入</span>
<span class="t gt" style="left:147px;top:12.44px;font-size:12.6px;line-height:15.12px;">设计</span>
<span class="t gt" style="left:191px;top:12.44px;font-size:12.6px;line-height:15.12px;">布局</span>
<span class="t gt" style="left:235px;top:12.44px;font-size:12.6px;line-height:15.12px;">引用</span>
<span class="t gt" style="left:279px;top:12.44px;font-size:12.6px;line-height:15.12px;">邮件</span>
<span class="t gt" style="left:323px;top:12.44px;font-size:12.6px;line-height:15.12px;">审阅</span>
<span class="t gt" style="left:367px;top:12.44px;font-size:12.6px;line-height:15.12px;">视图</span>
<span class="t gt" style="left:59px;top:12.44px;font-size:12.6px;line-height:15.12px;font-weight:bold;">开始</span>
<div class="b" style="left:59.5px;top:29.5px;width:26px;height:3px;background:#ffffff;border-radius:1.5px;"></div>
<span class="t" style="left:409px;top:12.2px;font-size:13px;line-height:15.6px;color:#f1f1f1;">Math</span>
<span class="t" style="left:456.5px;top:12.2px;font-size:13px;line-height:15.6px;color:#f1f1f1;">Script Lab</span>
<span class="t" style="left:537.5px;top:12.2px;font-size:13px;line-height:15.6px;color:#f1f1f1;">1Checker</span>
<span class="t" style="left:613.5px;top:12.2px;font-size:13px;line-height:15.6px;color:#f1f1f1;">Beautiful</span>
<svg class="b" style="left:13px;top:40px;" width="30" height="32" viewBox="0 0 30 32" fill="none"><path d="M9 4.5 H3.2 V25.5 H13" stroke="#e9a227" stroke-width="1.7"/><path d="M15 4.5 H21 V12" stroke="#e9a227" stroke-width="1.7"/><path d="M8.2 6.2 V3.6 H10.4 A1.8 1.8 0 0 1 13.9 3.6 H16 V6.2 Z" stroke="#d8d8d8" stroke-width="1.2" fill="#31302e"/><rect x="14.7" y="13" width="12.6" height="16.4" stroke="#d0d0d0" stroke-width="1.5" fill="#31302e"/></svg>
<span class="t gt" style="left:14.5px;top:72.92px;font-size:11.8px;line-height:14.16px;">粘贴</span>
<svg class="b" style="left:23.3px;top:91.1px;" width="8" height="5.0" viewBox="0 0 8 5.0" fill="none"><path d="M1 1 L4.0 4.0 L7 1" stroke="#e8e8e8" stroke-width="1.3" stroke-linecap="round" stroke-linejoin="round"/></svg>
<svg class="b" style="left:50px;top:41px;" width="14" height="18" viewBox="0 0 14 18" fill="none"><path d="M4 1.5 L9.3 12.2 M10 1.5 L4.7 12.2" stroke="#c9c9c9" stroke-width="1.2" stroke-linecap="round"/><circle cx="3.8" cy="14.2" r="2" stroke="#c9c9c9" stroke-width="1.1"/><circle cx="10.2" cy="14.2" r="2" stroke="#c9c9c9" stroke-width="1.1"/></svg>
<svg class="b" style="left:48px;top:64px;" width="18" height="17" viewBox="0 0 18 17" fill="none"><path d="M5.5 12.3 H1.6 V1.6 H7.6" stroke="#c9c9c9" stroke-width="1.2"/><path d="M6.6 4.6 H12 L15.4 8 V15.4 H6.6 Z" stroke="#c9c9c9" stroke-width="1.2"/><path d="M9 10.5 H13 M9 12.7 H13" stroke="#c9c9c9" stroke-width="1"/></svg>
<svg class="b" style="left:48px;top:86px;" width="18" height="16" viewBox="0 0 18 16" fill="none"><path d="M12.5 1.5 L16 3.6 L11.8 8.6 L9 6.8 Z" stroke="#d8d8d8" stroke-width="1.1"/><path d="M8.6 6.5 L12 8.8 L10.8 10.2 L4.2 13.6 L1.8 11.4 Z" stroke="#f0cf4a" stroke-width="1.3" fill="#f0cf4a" fill-opacity=".55"/></svg>
<span class="t gt" style="left:12px;top:110.04px;font-size:11.6px;line-height:13.92px;">剪贴板</span>
<svg class="b" style="left:62.5px;top:112.5px;" width="10" height="10" viewBox="0 0 10 10" fill="none"><path d="M1.5 1 V6 M3.4 2.6 L8 7.4 M8.2 3.6 V7.8 H4" stroke="#dedede" stroke-width="1.2"/></svg>
<div class="b" style="left:74.5px;top:40px;width:1px;height:82px;background:transparent;border-left:1px dotted rgba(255,255,255,.11);"></div>
<div class="b" style="left:83px;top:39.5px;width:118px;height:21px;background:#2b2a28;border:1px solid #5c5b59;"></div>
<span class="t gt" style="left:85.5px;top:43.22px;font-size:11.8px;line-height:14.16px;">等线 (中文正文)</span>
<span class="t" style="left:90px;top:64.8px;font-size:12.5px;line-height:15.0px;color:#f1f1f1;font-weight:bold;">B</span>
<span class="t" style="left:112.5px;top:64.8px;font-size:12.5px;line-height:15.0px;color:#f1f1f1;font-style:italic;font-family:'Liberation Serif',serif;">I</span>
<span class="t" style="left:132.6px;top:64.8px;font-size:12.5px;line-height:15.0px;color:#f1f1f1;text-decoration:underline;">U</span>
<span class="t" style="left:88.2px;top:84.6px;font-size:16px;line-height:19.2px;color:#33465e;font-weight:bold;-webkit-text-stroke:1.05px #2f92ec;text-shadow:0 0 1.5px rgba(70,160,250,.5);">A</span>
<svg class="b" style="left:105.0px;top:91.5px;" width="8" height="5.0" viewBox="0 0 8 5.0" fill="none"><path d="M1 1 L4.0 4.0 L7 1" stroke="#e8e8e8" stroke-width="1.3" stroke-linecap="round" stroke-linejoin="round"/></svg>
<svg class="b" style="left:317.9878640776699px;top:112.32281553398056px;" width="9" height="9" viewBox="0 0 9 9" fill="none"><path d="M1.2 1 V5.6 M3 2.4 L7.4 6.8 M7.6 3.2 V7.2 H3.6" stroke="#e4e4e4" stroke-width="1.1"/></svg>
<div class="b" style="left:329.5px;top:108px;width:1px;height:13px;background:rgba(255,255,255,.13);"></div>
<svg class="b" style="left:527px;top:42px;" width="32" height="28" viewBox="0 0 32 28" fill="none"><path d="M3 24 L11 3.5 L19 24 M6 16.5 H16" stroke="#e6e6e6" stroke-width="1.5" stroke-linejoin="round"/><path d="M29.6 8.2 C30.6 9.4 24.6 17.6 20 22.4 L18 20.6 C22 15.6 28.6 7.2 29.6 8.2 Z" stroke="#d6d6d6" stroke-width="1.1" stroke-linejoin="round"/><path d="M18.6 20.2 C14.5 19.8 12.6 23 9.5 24.6 C13.5 27 18.5 26.4 19.8 22.2 Z" fill="#3a96e8"/></svg>
<span class="t gt" style="left:529.5px;top:74.24px;font-size:11.6px;line-height:13.92px;">样式</span>
<svg class="b" style="left:537.0px;top:92.3px;" width="8" height="5.0" viewBox="0 0 8 5.0" fill="none"><path d="M1 1 L4.0 4.0 L7 1" stroke="#e8e8e8" stroke-width="1.3" stroke-linecap="round" stroke-linejoin="round"/></svg>
<svg class="b" style="left:465.69174757281553px;top:112.5px;" width="10" height="10" viewBox="0 0 10 10" fill="none"><path d="M1.5 1 V6 M3.4 2.6 L8 7.4 M8.2 3.6 V7.8 H4" stroke="#dedede" stroke-width="1.2"/></svg>
<div class="b" style="left:568.5px;top:40px;width:1px;height:82px;background:transparent;border-left:1px dotted rgba(255,255,255,.11);"></div>
<div class="b" style="left:579px;top:38.5px;width:30.5px;height:29.5px;background:#3b3a38;border:1px solid #6b6a68;"></div>
<svg class="b" style="left:584px;top:43px;" width="21" height="21" viewBox="0 0 21 21" fill="none"><circle cx="12.3" cy="7.6" r="4.6" stroke="#e2e2e2" stroke-width="1.3"/><path d="M9 11 L3 17.2" stroke="#e2e2e2" stroke-width="1.4" stroke-linecap="round"/></svg>
<span class="t gt" style="left:582.5px;top:71.34px;font-size:11.6px;line-height:13.92px;">编辑</span>
<svg class="b" style="left:591.0px;top:89.8px;" width="8" height="5.0" viewBox="0 0 8 5.0" fill="none"><path d="M1 1 L4.0 4.0 L7 1" stroke="#e8e8e8" stroke-width="1.3" stroke-linecap="round" stroke-linejoin="round"/></svg>
<div class="b" style="left:618px;top:40px;width:1px;height:82px;background:transparent;border-left:1px dotted rgba(255,255,255,.11);"></div>
<svg class="b" style="left:650px;top:52px;" width="24" height="17" viewBox="0 0 24 17" fill="none"><path d="M2 6 V15 H9 M14 15 H21.5 V8" stroke="#2f86e0" stroke-width="1.4"/><path d="M13.5 12.5 V4 M10.4 6.8 L13.5 3.6 L16.6 6.8" stroke="#2f86e0" stroke-width="1.4" stroke-linejoin="round"/></svg>
<svg class="b" style="left:698px;top:52px;" width="32" height="17" viewBox="0 0 32 17" fill="none"><path d="M2 9 L9 3 L13 6.5 L6 12.5 H2 Z" stroke="#2f86e0" stroke-width="1.3" stroke-linejoin="round"/><path d="M13 11.5 L16 8.5 L19 11.5 L22 8.5 L25 11.5 L28 9" stroke="#2f86e0" stroke-width="1.2"/><path d="M12 15.3 H30" stroke="#2f86e0" stroke-width="1.5"/></svg>
<span class="t gt" style="left:632px;top:74.16px;font-size:11.4px;line-height:13.68px;">创建并共享</span>
<span class="t" style="left:629.5px;top:87.4px;font-size:12px;line-height:14.4px;color:#f1f1f1;">Adobe PDF</span>
<span class="t gt" style="left:702px;top:74.16px;font-size:11.4px;line-height:13.68px;">请求</span>
<span class="t gt" style="left:702px;top:88.36px;font-size:11.4px;line-height:13.68px;">签名</span>
<span class="t" style="left:639px;top:109.68px;font-size:12.2px;line-height:14.64px;color:#f1f1f1;">Adobe Acrobat</span>
<div class="b" style="left:742px;top:40px;width:1px;height:82px;background:transparent;border-left:1px dotted rgba(255,255,255,.11);"></div>
<svg class="b" style="left:757px;top:47px;" width="24" height="22" viewBox="0 0 24 22" fill="none"><path d="M3 1 H21 V20 H3 Z" stroke="#777" stroke-width="1.3"/><path d="M9 2 L19 10 M12 1.5 L20 8" stroke="#8a8a8a" stroke-width="1.6"/></svg>
<span class="t gt" style="left:757px;top:74.16px;font-size:11.4px;line-height:13.68px;color:#7d7d7d;">敏感</span>
<span class="t gt" style="left:757px;top:87.76px;font-size:11.4px;line-height:13.68px;color:#7d7d7d;">性</span>
<svg class="b" style="left:772.5px;top:92.75px;" width="7" height="4.5" viewBox="0 0 7 4.5" fill="none"><path d="M1 1 L3.5 3.5 L6 1" stroke="#7d7d7d" stroke-width="1.3" stroke-linecap="round" stroke-linejoin="round"/></svg>
<span class="t gt" style="left:751px;top:110.04px;font-size:11.6px;line-height:13.92px;">敏感度</span>
<span class="t gt" style="left:8px;top:135.46px;font-size:11.4px;line-height:13.68px;">自动保存</span>
<div class="b" style="left:58px;top:133.5px;width:33px;height:17px;background:transparent;border:1.4px solid #e4e4e4;border-radius:9px;"></div>
<div class="b" style="left:62.2px;top:138px;width:8px;height:8px;background:#f2f2f2;border-radius:50%;"></div>
<span class="t gt" style="left:77px;top:135.9px;font-size:10.5px;line-height:12.6px;">关</span>
<svg class="b" style="left:235px;top:135.5px;" width="17" height="17" viewBox="0 0 17 17" fill="none"><path d="M2.2 7 H5.4" stroke="#d9d9d9" stroke-width="1.2"/><path d="M9.2 1.6 A5.2 5.2 0 0 1 10.6 10.8 L4.6 16" stroke="#d9d9d9" stroke-width="1.3" stroke-linecap="round"/></svg>
<svg class="b" style="left:254.0px;top:140.65px;" width="7.4" height="4.7" viewBox="0 0 7.4 4.7" fill="none"><path d="M1 1 L3.7 3.7 L6.4 1" stroke="#f0f0f0" stroke-width="1.2" stroke-linecap="round" stroke-linejoin="round"/></svg>
<svg class="b" style="left:269.5px;top:135.5px;" width="18" height="17" viewBox="0 0 18 17" fill="none"><path d="M15.4 1.8 V8 H9.6" stroke="#d9d9d9" stroke-width="1.3" stroke-linejoin="miter"/><path d="M15 7.6 C13.4 2.4 6.6 1 3.6 5 C2 7.4 3 9.4 4.2 10.6 L9.8 16" stroke="#d9d9d9" stroke-width="1.3" stroke-linecap="round"/></svg>
<svg class="b" style="left:294px;top:135.5px;" width="18" height="17" viewBox="0 0 18 17" fill="none"><path d="M3.6 1 V5.4 H14.4 V1" stroke="#d9d9d9" stroke-width="1.3"/><path d="M3.6 16 V11.6 H14.4 V16" stroke="#d9d9d9" stroke-width="1.3"/><path d="M1.2 8.4 H16.8" stroke="#3d8be0" stroke-width="1.5" stroke-dasharray="2.6 1"/></svg>
<svg class="b" style="left:316.3px;top:140.85px;" width="7.4" height="4.7" viewBox="0 0 7.4 4.7" fill="none"><path d="M1 1 L3.7 3.7 L6.4 1" stroke="#f0f0f0" stroke-width="1.2" stroke-linecap="round" stroke-linejoin="round"/></svg>
<svg class="b" style="left:332.5px;top:135.5px;" width="17" height="17" viewBox="0 0 17 17" fill="none"><path d="M5.4 12.6 H1.4 V1.4 H7.8 L9.4 3" stroke="#8b8b8b" stroke-width="1.25"/><path d="M6.2 4.4 H11.8 L15.4 8 V15.6 H6.2 Z" stroke="#9a9a9a" stroke-width="1.25"/><path d="M8.8 10.6 H13 M8.8 12.8 H13" stroke="#9a9a9a" stroke-width="1.1"/></svg>
<svg class="b" style="left:357.5px;top:136px;" width="17" height="16" viewBox="0 0 17 16" fill="none"><path d="M7 2.6 H16 M7 13.6 H16 M13 8 H16" stroke="#8b8b8b" stroke-width="1.2"/><path d="M1.4 8 H10.6 M3.8 5.6 L1.4 8 L3.8 10.4 M8.2 5.6 L10.6 8 L8.2 10.4" stroke="#8b8b8b" stroke-width="1.1"/></svg>
<svg class="b" style="left:379.0px;top:140.75px;" width="7" height="4.5" viewBox="0 0 7 4.5" fill="none"><path d="M1 1 L3.5 3.5 L6 1" stroke="#6e6e6e" stroke-width="1.1" stroke-linecap="round" stroke-linejoin="round"/></svg>
<svg class="b" style="left:395.5px;top:135.5px;" width="17" height="17" viewBox="0 0 17 17" fill="none"><path d="M6.4 2.4 H15 V11 H8.2 L4.6 14.8 V11 H2.6 V7.6" stroke="#8b8b8b" stroke-width="1.2" stroke-linejoin="round"/><path d="M1 4.4 H7 M3 2.4 L1 4.4 L3 6.4" stroke="#8b8b8b" stroke-width="1.1"/></svg>
<svg class="b" style="left:423.5px;top:135.5px;" width="17" height="17" viewBox="0 0 17 17" fill="none"><path d="M2 2.4 H15 V11 H8.2 L4.6 14.8 V11 H2 Z" stroke="#8b8b8b" stroke-width="1.2" stroke-linejoin="round"/><path d="M9 0.8 H13" stroke="#8b8b8b" stroke-width="1.1"/></svg>
<div class="b" style="left:442.3px;top:131px;width:1px;height:26px;background:transparent;border-left:1px dotted rgba(255,255,255,.2);"></div>
<svg class="b" style="left:594.5px;top:138px;" width="11" height="8" viewBox="0 0 11 8" fill="none"><path d="M1 6.4 L5.5 1.4 L10 6.4" stroke="#2f8fe8" stroke-width="1.3" stroke-linejoin="round"/></svg>
<svg class="b" style="left:621.5px;top:140px;" width="11" height="8" viewBox="0 0 11 8" fill="none"><path d="M1 1.4 L5.5 6.4 L10 1.4" stroke="#2f8fe8" stroke-width="1.3" stroke-linejoin="round"/></svg>
<svg class="b" style="left:647px;top:137px;" width="17" height="12" viewBox="0 0 17 12" fill="none"><path d="M1 6 H15 M10.4 1.6 L15 6 L10.4 10.4" stroke="#8d8d8d" stroke-width="1.2"/></svg>
<div class="b" style="left:674px;top:131.5px;width:77px;height:22.5px;background:#3a3938;border:1px solid #6a6a68;border-right:none;"></div>
<div class="b" style="left:750.5px;top:131.5px;width:14px;height:22.5px;background:#2d2c2a;border:1px solid #6a6a68;"></div>
<span class="t gt" style="left:676.5px;top:135.28px;font-size:11.2px;line-height:13.44px;">所有级别</span>
<svg class="b" style="left:754.2px;top:140.85px;" width="6.6" height="4.3" viewBox="0 0 6.6 4.3" fill="none"><path d="M1 1 L3.3 3.3 L5.6 1" stroke="#f0f0f0" stroke-width="1.2" stroke-linecap="round" stroke-linejoin="round"/></svg>
<svg class="b" style="left:774px;top:134px;" width="18" height="19" viewBox="0 0 18 19" fill="none"><path d="M11 1.4 H2.4 V16.6 H8" stroke="#d8d8d8" stroke-width="1.3"/><path d="M4.6 3.6 H9" stroke="#e8c240" stroke-width="1.6"/></svg>
<span class="t gt" style="left:782px;top:141.4px;font-size:8.5px;line-height:10.2px;color:#d8d8d8;">あ</span>
<div class="b" style="left:0px;top:229px;width:3px;height:86px;background:#1d73c9;border-radius:0 3px 3px 0;"></div>
<span class="t gt" style="left:9.5px;top:170.14px;font-size:20.6px;line-height:24.72px;">导航</span>
<div class="b" style="left:9px;top:208.5px;width:194px;height:23.5px;background:#262524;border:1px solid #585755;"></div>
<div class="b" style="left:176px;top:208.5px;width:27px;height:23.5px;background:#3a3937;border:1px solid #585755;"></div>
<span class="t gt" style="left:12.5px;top:213.66px;font-size:11.4px;line-height:13.68px;color:#8b8b8b;">在文档中搜索</span>
<svg class="b" style="left:174.5px;top:212.5px;" width="12" height="12" viewBox="0 0 12 12" fill="none"><circle cx="6" cy="5.6" r="2.9" stroke="#cfcfcf" stroke-width="1"/><path d="M3.9 7.8 L1.4 10.6" stroke="#cfcfcf" stroke-width="1.1"/></svg>
<svg class="b" style="left:190.60000000000002px;top:217.25px;" width="7.4" height="4.7" viewBox="0 0 7.4 4.7" fill="none"><path d="M1 1 L3.7 3.7 L6.4 1" stroke="#ececec" stroke-width="1.2" stroke-linecap="round" stroke-linejoin="round"/></svg>
<span class="t gt" style="left:10px;top:247.92px;font-size:11.8px;line-height:14.16px;font-weight:bold;">标题</span>
<div class="b" style="left:10px;top:268px;width:24.5px;height:2.6px;background:#ffffff;border-radius:1px;"></div>
<div class="b" style="left:44px;top:245px;width:1px;height:21px;background:#5a5a5a;"></div>
<span class="t gt" style="left:56px;top:247.92px;font-size:11.8px;line-height:14.16px;">页面</span>
<span class="t gt" style="left:102px;top:247.92px;font-size:11.8px;line-height:14.16px;">结果</span>
<div class="b" style="left:24.5px;top:275.5px;width:167.5px;height:17px;background:#6c6c6c;"></div>
<svg class="b" style="left:14px;top:297.5px;" width="8" height="8" viewBox="0 0 8 8" fill="none"><path d="M6.6 1.2 V6.8 H1 Z" fill="#c8c8c8"/></svg>
<span class="t gt" style="left:30px;top:295.16px;font-size:11.4px;line-height:13.68px;">第一章 绪论</span>
<span class="t gt" style="left:45.5px;top:316.16px;font-size:11.4px;line-height:13.68px;">1 前言</span>
<div class="b" style="left:40px;top:332px;width:151.5px;height:18.4px;background:#2b5db3;"></div>
<span class="t gt" style="left:45.5px;top:336.36px;font-size:11.4px;line-height:13.68px;color:#ffffff;">2 材料与仪器</span>
<span class="t gt" style="left:45.5px;top:356.16px;font-size:11.4px;line-height:13.68px;">3 实验方法</span>
<div class="b" style="left:219.5px;top:161px;width:23px;height:20.5px;background:#0c0c0c;"></div>
<svg class="b" style="left:226.8px;top:167.2px;" width="9" height="9" viewBox="0 0 9 9" fill="none"><path d="M2 0.6 V6.2 H7.4" stroke="#cdcdcd" stroke-width="1.7"/></svg>
<div class="b" style="left:263.5px;top:163px;width:514.5px;height:15.4px;background:#0c0c0c;"></div>
<div class="b" style="left:343.7px;top:163px;width:351.3px;height:15.4px;background:#4a4a4a;"></div>
<div class="b" style="left:263.5px;top:163px;width:514.5px;height:15.4px;background:transparent;border-top:1px solid rgba(255,255,255,.08);border-bottom:1px solid rgba(255,255,255,.06);"></div>
<div class="b" style="left:337.2px;top:167.2px;width:6.5px;height:7.6px;background:#8a8a8a;background-image:repeating-linear-gradient(0deg,rgba(0,0,0,.45) 0 .6px,transparent .6px 1.8px),repeating-linear-gradient(90deg,rgba(0,0,0,.45) 0 .6px,transparent .6px 1.8px);"></div>
<div class="b" style="left:695.4px;top:166.6px;width:7.6px;height:8.4px;background:transparent;background-image:repeating-linear-gradient(0deg,rgba(225,225,225,.75) 0 .7px,transparent .7px 2.1px),repeating-linear-gradient(90deg,rgba(225,225,225,.75) 0 .7px,transparent .7px 2.1px);"></div>
<span class="t rl" style="left:317.98px;top:165.2px;">2</span>
<span class="t rl" style="left:299.86px;top:165.2px;">4</span>
<span class="t rl" style="left:281.74px;top:165.2px;">6</span>
<span class="t rl" style="left:263.62px;top:165.2px;">8</span>
<span class="t rl" style="left:354.22px;top:165.2px;">2</span>
<span class="t rl" style="left:372.34px;top:165.2px;">4</span>
<span class="t rl" style="left:390.46px;top:165.2px;">6</span>
<span class="t rl" style="left:408.58px;top:165.2px;">8</span>
<span class="t rl" style="left:426.7px;top:165.2px;">10</span>
<span class="t rl" style="left:444.82px;top:165.2px;">12</span>
<span class="t rl" style="left:462.94px;top:165.2px;">14</span>
<span class="t rl" style="left:481.06px;top:165.2px;">16</span>
<span class="t rl" style="left:499.18px;top:165.2px;">18</span>
<span class="t rl" style="left:517.3px;top:165.2px;">20</span>
<span class="t rl" style="left:535.42px;top:165.2px;">22</span>
<span class="t rl" style="left:553.54px;top:165.2px;">24</span>
<span class="t rl" style="left:571.66px;top:165.2px;">26</span>
<span class="t rl" style="left:589.78px;top:165.2px;">28</span>
<span class="t rl" style="left:607.9px;top:165.2px;">30</span>
<span class="t rl" style="left:626.02px;top:165.2px;">32</span>
<span class="t rl" style="left:644.14px;top:165.2px;">34</span>
<span class="t rl" style="left:662.26px;top:165.2px;">36</span>
<span class="t rl" style="left:680.38px;top:165.2px;">38</span>
<span class="t rl" style="left:698.5px;top:165.2px;">40</span>
<span class="t rl" style="left:716.62px;top:165.2px;">42</span>
<span class="t rl" style="left:734.74px;top:165.2px;">44</span>
<span class="t rl" style="left:752.86px;top:165.2px;">46</span>
<svg class="b" style="left:341.6px;top:160.6px;" width="9" height="24" viewBox="0 0 9 24" fill="none"><path d="M0.6 0.6 H8.4 V3.6 L4.5 7.4 L0.6 3.6 Z" fill="#9c9c9c"/><path d="M4.5 9.8 L8.4 13.4 V17 H0.6 V13.4 Z" fill="#9c9c9c"/><rect x="0.6" y="17.8" width="7.8" height="4.6" fill="#9c9c9c"/></svg>
<div class="b" style="left:457.4px;top:168.6px;width:5.6px;height:6.6px;background:transparent;background-image:repeating-linear-gradient(0deg,rgba(225,225,225,.6) 0 .6px,transparent .6px 1.8px),repeating-linear-gradient(90deg,rgba(225,225,225,.6) 0 .6px,transparent .6px 1.8px);"></div>
<svg class="b" style="left:451.5830097087379px;top:170.4px;" width="8.8" height="8.4" viewBox="0 0 8.8 8.4" fill="none"><path d="M4.4 0.6 L8.4 4.2 V8 H0.4 V4.2 Z" fill="#a6a6a6"/></svg>
<div class="b" style="left:221.6px;top:184.3px;width:17px;height:523.2px;background:#444444;border-left:1px solid #333;border-right:1px solid #333;"></div>
<div class="b" style="left:222.6px;top:311.79999999999995px;width:15px;height:4.2px;background:#050505;"></div>
<div class="b" style="left:222.6px;top:338.4px;width:15px;height:4.2px;background:#050505;"></div>
<div class="b" style="left:222.6px;top:362.79999999999995px;width:15px;height:4.2px;background:#050505;"></div>
<div class="b" style="left:222.6px;top:685.5px;width:15px;height:22px;background:#050505;"></div>
<span class="t vl" style="left:220.6px;top:185.86px;">8</span>
<div class="b" style="left:227.8px;top:197.31px;width:5.6px;height:0.7px;background:rgba(255,255,255,.42);"></div>
<span class="t vl" style="left:220.6px;top:212.6px;">10</span>
<div class="b" style="left:227.8px;top:210.45px;width:5.6px;height:0.7px;background:rgba(255,255,255,.42);"></div>
<div class="b" style="left:227.8px;top:224.05px;width:5.6px;height:0.7px;background:rgba(255,255,255,.42);"></div>
<span class="t vl" style="left:220.6px;top:239.34px;">12</span>
<div class="b" style="left:227.8px;top:237.19px;width:5.6px;height:0.7px;background:rgba(255,255,255,.42);"></div>
<div class="b" style="left:227.8px;top:250.79px;width:5.6px;height:0.7px;background:rgba(255,255,255,.42);"></div>
<span class="t vl" style="left:220.6px;top:266.08px;">14</span>
<div class="b" style="left:227.8px;top:263.93px;width:5.6px;height:0.7px;background:rgba(255,255,255,.42);"></div>
<div class="b" style="left:227.8px;top:277.53px;width:5.6px;height:0.7px;background:rgba(255,255,255,.42);"></div>
<span class="t vl" style="left:220.6px;top:292.82px;">16</span>
<div class="b" style="left:227.8px;top:290.67px;width:5.6px;height:0.7px;background:rgba(255,255,255,.42);"></div>
<div class="b" style="left:227.8px;top:304.27px;width:5.6px;height:0.7px;background:rgba(255,255,255,.42);"></div>
<span class="t vl" style="left:220.6px;top:319.56px;">18</span>
<div class="b" style="left:227.8px;top:317.41px;width:5.6px;height:0.7px;background:rgba(255,255,255,.42);"></div>
<div class="b" style="left:227.8px;top:331.01px;width:5.6px;height:0.7px;background:rgba(255,255,255,.42);"></div>
<span class="t vl" style="left:220.6px;top:346.3px;">20</span>
<div class="b" style="left:227.8px;top:344.15px;width:5.6px;height:0.7px;background:rgba(255,255,255,.42);"></div>
<div class="b" style="left:227.8px;top:357.75px;width:5.6px;height:0.7px;background:rgba(255,255,255,.42);"></div>
<span class="t vl" style="left:220.6px;top:373.04px;">22</span>
<div class="b" style="left:227.8px;top:370.89px;width:5.6px;height:0.7px;background:rgba(255,255,255,.42);"></div>
<div class="b" style="left:227.8px;top:384.49px;width:5.6px;height:0.7px;background:rgba(255,255,255,.42);"></div>
<span class="t vl" style="left:220.6px;top:399.78px;">24</span>
<div class="b" style="left:227.8px;top:397.63px;width:5.6px;height:0.7px;background:rgba(255,255,255,.42);"></div>
<div class="b" style="left:227.8px;top:411.23px;width:5.6px;height:0.7px;background:rgba(255,255,255,.42);"></div>
<span class="t vl" style="left:220.6px;top:426.52px;">26</span>
<div class="b" style="left:227.8px;top:424.37px;width:5.6px;height:0.7px;background:rgba(255,255,255,.42);"></div>
<div class="b" style="left:227.8px;top:437.97px;width:5.6px;height:0.7px;background:rgba(255,255,255,.42);"></div>
<span class="t vl" style="left:220.6px;top:453.26px;">28</span>
<div class="b" style="left:227.8px;top:451.11px;width:5.6px;height:0.7px;background:rgba(255,255,255,.42);"></div>
<div class="b" style="left:227.8px;top:464.71px;width:5.6px;height:0.7px;background:rgba(255,255,255,.42);"></div>
<span class="t vl" style="left:220.6px;top:480.0px;">30</span>
<div class="b" style="left:227.8px;top:477.85px;width:5.6px;height:0.7px;background:rgba(255,255,255,.42);"></div>
<div class="b" style="left:227.8px;top:491.45px;width:5.6px;height:0.7px;background:rgba(255,255,255,.42);"></div>
<span class="t vl" style="left:220.6px;top:506.74px;">32</span>
<div class="b" style="left:227.8px;top:504.59px;width:5.6px;height:0.7px;background:rgba(255,255,255,.42);"></div>
<div class="b" style="left:227.8px;top:518.19px;width:5.6px;height:0.7px;background:rgba(255,255,255,.42);"></div>
<span class="t vl" style="left:220.6px;top:533.48px;">34</span>
<div class="b" style="left:227.8px;top:531.33px;width:5.6px;height:0.7px;background:rgba(255,255,255,.42);"></div>
<div class="b" style="left:227.8px;top:544.93px;width:5.6px;height:0.7px;background:rgba(255,255,255,.42);"></div>
<span class="t vl" style="left:220.6px;top:560.22px;">36</span>
<div class="b" style="left:227.8px;top:558.07px;width:5.6px;height:0.7px;background:rgba(255,255,255,.42);"></div>
<div class="b" style="left:227.8px;top:571.67px;width:5.6px;height:0.7px;background:rgba(255,255,255,.42);"></div>
<span class="t vl" style="left:220.6px;top:586.96px;">38</span>
<div class="b" style="left:227.8px;top:584.81px;width:5.6px;height:0.7px;background:rgba(255,255,255,.42);"></div>
<div class="b" style="left:227.8px;top:598.41px;width:5.6px;height:0.7px;background:rgba(255,255,255,.42);"></div>
<span class="t vl" style="left:220.6px;top:613.7px;">40</span>
<div class="b" style="left:227.8px;top:611.55px;width:5.6px;height:0.7px;background:rgba(255,255,255,.42);"></div>
<div class="b" style="left:227.8px;top:625.15px;width:5.6px;height:0.7px;background:rgba(255,255,255,.42);"></div>
<span class="t vl" style="left:220.6px;top:640.44px;">42</span>
<div class="b" style="left:227.8px;top:638.29px;width:5.6px;height:0.7px;background:rgba(255,255,255,.42);"></div>
<div class="b" style="left:227.8px;top:651.89px;width:5.6px;height:0.7px;background:rgba(255,255,255,.42);"></div>
<span class="t vl" style="left:220.6px;top:667.18px;">44</span>
<div class="b" style="left:227.8px;top:665.03px;width:5.6px;height:0.7px;background:rgba(255,255,255,.42);"></div>
<div class="b" style="left:227.8px;top:678.63px;width:5.6px;height:0.7px;background:rgba(255,255,255,.42);"></div>
<span class="t vl" style="left:220.6px;top:693.92px;">46</span>
<div class="b" style="left:264.6px;top:184.2px;width:513.4px;height:523.3px;background:#fdfdfc;"></div>
<div class="b" style="left:790px;top:184.2px;width:10px;height:523.3px;background:#fdfdfc;"></div>
<svg class="b" style="left:264.6px;top:184.2px;" width="513.4" height="523.3" viewBox="264.6 184.2 513.4 523.3" fill="none"><polygon points="675.1,189.1 723.1,242.1 740.9,225.9 692.9,172.9" fill="#dff5f9"/><polygon points="632.6,208.4 672.6,189.4 667.4,178.6 627.4,197.6" fill="#dff5f9" fill-opacity=".8"/><polygon points="600.3,211.5 682.3,285.5 697.7,268.5 615.7,194.5" fill="#dff5f9"/><polygon points="594.5,248.0 635.5,298.0 652.5,284.0 611.5,234.0" fill="#dff5f9"/><polygon points="254.2,550.9 290.2,573.9 297.8,562.1 261.8,539.1" fill="#dff5f9"/><polygon points="310.8,552.9 386.8,602.9 397.2,587.1 321.2,537.1" fill="#dff5f9"/><ellipse cx="455" cy="384" rx="19" ry="10" fill="#dff5f9"/></svg>
<div class="b" style="left:794.5px;top:545px;width:8px;height:12px;background:#dff5f9;border-radius:50%;"></div>
<span class="t gt" style="left:341.7px;top:182.9px;font-size:10.5px;line-height:12.6px;letter-spacing:-0.14px;color:#111;">工程的关键步骤，是基因工程中的</span>
<span class="t gt" style="left:582.5px;top:182.9px;font-size:10.5px;line-height:12.6px;letter-spacing:-0.45px;color:#111;">的关键步骤。</span>
<svg class="b" style="left:643.2px;top:186.4px;" width="6.65" height="5.6" viewBox="0 0 9.5 8" fill="none"><path d="M8.6 0.6 V5 H1.4 M3.6 2.8 L1.4 5 L3.6 7.2" stroke="#8c8c8c" stroke-width="1.05"/></svg>
<div class="b" style="left:336.4px;top:218.7px;width:2.8px;height:2.8px;background:#111;"></div>
<span class="t" style="left:341.8px;top:211.68px;font-size:13.7px;line-height:16.44px;color:#111;">2</span>
<span class="t gt" style="left:355.8px;top:211.68px;font-size:13.7px;line-height:16.44px;color:#111;">材料与仪器</span>
<svg class="b" style="left:425.4px;top:217.6px;" width="9.97" height="8.4" viewBox="0 0 9.5 8" fill="none"><path d="M8.6 0.6 V5 H1.4 M3.6 2.8 L1.4 5 L3.6 7.2" stroke="#8c8c8c" stroke-width="1.05"/></svg>
<span class="t gt" style="left:341.6px;top:252.6px;font-size:10.5px;line-height:12.6px;color:#2a2a2a;">实验所用材料与仪器，见表。</span>
<svg class="b" style="left:479.6px;top:254.46px;" width="8.17" height="6.88" viewBox="0 0 9.5 8" fill="none"><path d="M8.6 0.6 V5 H1.4 M3.6 2.8 L1.4 5 L3.6 7.2" stroke="#8c8c8c" stroke-width="1.05"/></svg>
<div class="b" style="left:327.8px;top:270.9px;width:14.7px;height:14.7px;background:#fbfbfb;border:1.1px solid #9a9a9a;"></div>
<svg class="b" style="left:330.3px;top:273.4px;" width="9.6" height="9.6" viewBox="0 0 9.6 9.6" fill="none"><path d="M4.8 0.6 V9 M0.6 4.8 H9" stroke="#8a8a8a" stroke-width="1"/><path d="M3.4 2 L4.8 0.6 L6.2 2 M3.4 7.6 L4.8 9 L6.2 7.6 M2 3.4 L0.6 4.8 L2 6.2 M7.6 3.4 L9 4.8 L7.6 6.2" stroke="#8a8a8a" stroke-width=".9"/></svg>
<svg class="b" style="left:343px;top:275.04px;" width="6.08" height="5.12" viewBox="0 0 9.5 8" fill="none"><path d="M8.6 0.6 V5 H1.4 M3.6 2.8 L1.4 5 L3.6 7.2" stroke="#a0a0a0" stroke-width="1.05"/></svg>
<div class="b" style="left:346.2px;top:286.2px;width:354.4px;height:78.8px;background:#c9c9c9;"></div>
<div class="b" style="left:700.6px;top:286.2px;width:6.2px;height:78.8px;background:#c9c9c9;"></div>
<svg class="b" style="left:600px;top:286.2px;" width="60" height="78.8" viewBox="0 0 60 78.8" fill="none"><path d="M27 0 H46 C46 12 40 22 33 32 C27 41 22 50 20 60 L4 60 C6 46 12 36 19 27 C24 20 27 10 27 0 Z" fill="#b7c8cf"/></svg>
<div class="b" style="left:341.4px;top:285.2px;width:359.20000000000005px;height:0px;background:transparent;border-top:.72px dashed #7c7c7c;"></div>
<div class="b" style="left:341.4px;top:312.5px;width:359.20000000000005px;height:0px;background:transparent;border-top:.72px dashed #7c7c7c;"></div>
<div class="b" style="left:341.4px;top:339.3px;width:359.20000000000005px;height:0px;background:transparent;border-top:.72px dashed #7c7c7c;"></div>
<div class="b" style="left:341.4px;top:364.9px;width:359.20000000000005px;height:0px;background:transparent;border-top:.72px dashed #7c7c7c;"></div>
<div class="b" style="left:341.4px;top:285.2px;width:0px;height:79.69999999999999px;background:transparent;border-left:.72px dashed #7c7c7c;"></div>
<div class="b" style="left:461.4px;top:285.2px;width:0px;height:79.69999999999999px;background:transparent;border-left:.72px dashed #7c7c7c;"></div>
<div class="b" style="left:581.2px;top:285.2px;width:0px;height:79.69999999999999px;background:transparent;border-left:.72px dashed #7c7c7c;"></div>
<div class="b" style="left:700.6px;top:285.2px;width:0px;height:79.69999999999999px;background:transparent;border-left:.72px dashed #7c7c7c;"></div>
<div class="b" style="left:700.6px;top:312.2px;width:6.2px;height:1.2px;background:#e6e6e6;"></div>
<div class="b" style="left:700.6px;top:339px;width:6.2px;height:1.2px;background:#e6e6e6;"></div>
<span class="t gt" style="left:347.2px;top:293.8px;font-size:10.5px;line-height:12.6px;color:#3a3a3a;">仪器</span>
<svg class="b" style="left:368.8px;top:297.4px;" width="7.6" height="6.4" viewBox="0 0 9.5 8" fill="none"><path d="M8.6 0.6 V5 H1.4 M3.6 2.8 L1.4 5 L3.6 7.2" stroke="#8c8c8c" stroke-width="1.05"/></svg>
<span class="t gt" style="left:465.4px;top:293.8px;font-size:10.5px;line-height:12.6px;color:#3a3a3a;">型号</span>
<svg class="b" style="left:487.2px;top:297.4px;" width="7.6" height="6.4" viewBox="0 0 9.5 8" fill="none"><path d="M8.6 0.6 V5 H1.4 M3.6 2.8 L1.4 5 L3.6 7.2" stroke="#8c8c8c" stroke-width="1.05"/></svg>
<span class="t gt" style="left:585.4px;top:293.8px;font-size:10.5px;line-height:12.6px;color:#3a3a3a;">厂家</span>
<svg class="b" style="left:606px;top:297.4px;" width="7.6" height="6.4" viewBox="0 0 9.5 8" fill="none"><path d="M8.6 0.6 V5 H1.4 M3.6 2.8 L1.4 5 L3.6 7.2" stroke="#8c8c8c" stroke-width="1.05"/></svg>
<svg class="b" style="left:347.4px;top:322.44px;" width="7.98" height="6.72" viewBox="0 0 9.5 8" fill="none"><path d="M8.6 0.6 V5 H1.4 M3.6 2.8 L1.4 5 L3.6 7.2" stroke="#8c8c8c" stroke-width="1.05"/></svg>
<svg class="b" style="left:466.2px;top:322.44px;" width="7.98" height="6.72" viewBox="0 0 9.5 8" fill="none"><path d="M8.6 0.6 V5 H1.4 M3.6 2.8 L1.4 5 L3.6 7.2" stroke="#8c8c8c" stroke-width="1.05"/></svg>
<svg class="b" style="left:586px;top:322.44px;" width="7.98" height="6.72" viewBox="0 0 9.5 8" fill="none"><path d="M8.6 0.6 V5 H1.4 M3.6 2.8 L1.4 5 L3.6 7.2" stroke="#8c8c8c" stroke-width="1.05"/></svg>
<svg class="b" style="left:347.4px;top:348.64px;" width="7.98" height="6.72" viewBox="0 0 9.5 8" fill="none"><path d="M8.6 0.6 V5 H1.4 M3.6 2.8 L1.4 5 L3.6 7.2" stroke="#8c8c8c" stroke-width="1.05"/></svg>
<svg class="b" style="left:466.2px;top:348.64px;" width="7.98" height="6.72" viewBox="0 0 9.5 8" fill="none"><path d="M8.6 0.6 V5 H1.4 M3.6 2.8 L1.4 5 L3.6 7.2" stroke="#8c8c8c" stroke-width="1.05"/></svg>
<svg class="b" style="left:586px;top:348.64px;" width="7.98" height="6.72" viewBox="0 0 9.5 8" fill="none"><path d="M8.6 0.6 V5 H1.4 M3.6 2.8 L1.4 5 L3.6 7.2" stroke="#8c8c8c" stroke-width="1.05"/></svg>
<svg class="b" style="left:701.2px;top:296.76px;" width="5.32" height="4.48" viewBox="0 0 9.5 8" fill="none"><path d="M8.6 0.6 V5 H1.4 M3.6 2.8 L1.4 5 L3.6 7.2" stroke="#777" stroke-width="1.05"/></svg>
<svg class="b" style="left:701.2px;top:323.76px;" width="5.32" height="4.48" viewBox="0 0 9.5 8" fill="none"><path d="M8.6 0.6 V5 H1.4 M3.6 2.8 L1.4 5 L3.6 7.2" stroke="#777" stroke-width="1.05"/></svg>
<svg class="b" style="left:701.2px;top:350.16px;" width="5.32" height="4.48" viewBox="0 0 9.5 8" fill="none"><path d="M8.6 0.6 V5 H1.4 M3.6 2.8 L1.4 5 L3.6 7.2" stroke="#777" stroke-width="1.05"/></svg>
<div class="b" style="left:700.8px;top:367.2px;width:14px;height:13.4px;background:#ffffff;border:1px solid #8e8e8e;"></div>
<svg class="b" style="left:358.6px;top:368.44px;" width="7.98" height="6.72" viewBox="0 0 9.5 8" fill="none"><path d="M8.6 0.6 V5 H1.4 M3.6 2.8 L1.4 5 L3.6 7.2" stroke="#8c8c8c" stroke-width="1.05"/></svg>
<div class="b" style="left:394.6px;top:384.6px;width:253.6px;height:149.6px;background:#4472c4;"></div>
<svg class="b" style="left:500px;top:460px;" width="60" height="40" viewBox="0 0 60 40" fill="none"><path d="M8 12 L31 11 L51.8 31 L23.5 18.8 Z" fill="#f7b32b"/></svg>
<svg class="b" style="left:651px;top:529.6px;" width="6.65" height="5.6" viewBox="0 0 9.5 8" fill="none"><path d="M8.6 0.6 V5 H1.4 M3.6 2.8 L1.4 5 L3.6 7.2" stroke="#8c8c8c" stroke-width="1.05"/></svg>
<svg class="b" style="left:341.6px;top:551.56px;" width="7.22" height="6.08" viewBox="0 0 9.5 8" fill="none"><path d="M8.6 0.6 V5 H1.4 M3.6 2.8 L1.4 5 L3.6 7.2" stroke="#8c8c8c" stroke-width="1.05"/></svg>
<div class="b" style="left:336.2px;top:591.8px;width:2.6px;height:2.6px;background:#111;"></div>
<span class="t" style="left:341.8px;top:585.2px;font-size:14.0px;line-height:16.8px;color:#111;">3</span>
<span class="t gt" style="left:356.4px;top:585.2px;font-size:14.0px;line-height:16.8px;color:#111;">实验方法</span>
<svg class="b" style="left:418.2px;top:589.04px;" width="7.98" height="6.72" viewBox="0 0 9.5 8" fill="none"><path d="M8.6 0.6 V5 H1.4 M3.6 2.8 L1.4 5 L3.6 7.2" stroke="#8c8c8c" stroke-width="1.05"/></svg>
<svg class="b" style="left:341.6px;top:627.16px;" width="7.22" height="6.08" viewBox="0 0 9.5 8" fill="none"><path d="M8.6 0.6 V5 H1.4 M3.6 2.8 L1.4 5 L3.6 7.2" stroke="#8c8c8c" stroke-width="1.05"/></svg>
<svg class="b" style="left:341.6px;top:654.16px;" width="7.22" height="6.08" viewBox="0 0 9.5 8" fill="none"><path d="M8.6 0.6 V5 H1.4 M3.6 2.8 L1.4 5 L3.6 7.2" stroke="#8c8c8c" stroke-width="1.05"/></svg>
<div class="b" style="left:327.4px;top:685.4px;width:15px;height:15px;background:transparent;border-top:1px solid #adadad;border-right:1px solid #adadad;"></div>
<div class="b" style="left:702px;top:685.4px;width:15px;height:15px;background:transparent;border-top:1px solid #adadad;border-left:1px solid #adadad;"></div>
<div class="b" style="left:0px;top:707px;width:800px;height:22px;background:#2f2e2c;"></div>
<div class="b" style="left:0px;top:726.6px;width:800px;height:2.4px;background:#0d0d0d;"></div>
<div class="b" style="left:0px;top:709.5px;width:3px;height:17.2px;background:#d9782a;"></div>
<span class="t gt" style="left:6px;top:711.24px;font-size:11.6px;line-height:13.92px;">第 3 页，共 5 页</span>
<span class="t gt" style="left:105px;top:711.24px;font-size:11.6px;line-height:13.92px;">311 个字</span>
<span class="t gt" style="left:163px;top:711.24px;font-size:11.6px;line-height:13.92px;">324 个字符</span>
<svg class="b" style="left:235.5px;top:711.5px;" width="15" height="14" viewBox="0 0 15 14" fill="none"><path d="M1.4 1.6 H5.6 L7.5 3 L9.4 1.6 H13.6 V10.6 H9.4 L7.5 12 L5.6 10.6 H1.4 Z" stroke="#e8e8e8" stroke-width="1.2" stroke-linejoin="round"/><path d="M7.5 3 V9 M5.4 7.4 L7.5 9.6 L10.6 5.6" stroke="#e8e8e8" stroke-width="1.1"/></svg>
<span class="t gt" style="left:266px;top:711.24px;font-size:11.6px;line-height:13.92px;">中文(中国)</span>
<svg class="b" style="left:335px;top:711.5px;" width="17" height="14" viewBox="0 0 17 14" fill="none"><path d="M1.4 11.6 V1.6 H15.4 V6" stroke="#e8e8e8" stroke-width="1.3"/><path d="M1.4 4.4 H15.4" stroke="#e8e8e8" stroke-width="1.2"/><circle cx="11" cy="9.4" r="2.6" stroke="#e8e8e8" stroke-width="1.2"/><path d="M4 11.6 H7" stroke="#e8e8e8" stroke-width="1.2"/></svg>
</div></div>
<div class="b" style="left:-56.0px;top:1.0px;width:800px;height:729px;">
<div class="b" style="left:260.5px;top:204.5px;width:145px;height:145px;background:rgba(255,255,0,.42);border-radius:50%;"></div>
<svg class="b" style="left:230px;top:180px;" width="250" height="240" viewBox="0 0 250 240" fill="none"><circle cx="127.5" cy="122.5" r="98" stroke="#f0707e" stroke-opacity=".5" stroke-width="4.6"/><circle cx="103" cy="96.3" r="40.6" stroke="#f5512d" stroke-opacity=".24" stroke-width="8.4"/><circle cx="103" cy="96.3" r="40.6" stroke="#f4532f" stroke-opacity=".88" stroke-width="4.8"/></svg>
<svg class="b" style="left:326px;top:268.5px;" width="14" height="14" viewBox="0 0 14 14" fill="none"><path d="M7 1.6 V12.4 M1.6 7 H12.4" stroke="#0a0a0a" stroke-width="1.5"/><path d="M4.8 3.4 L7 1 L9.2 3.4 Z M4.8 10.6 L7 13 L9.2 10.6 Z M3.4 4.8 L1 7 L3.4 9.2 Z M10.6 4.8 L13 7 L10.6 9.2 Z" fill="#0a0a0a"/></svg>
<svg class="b" style="left:331.4px;top:275.6px;" width="12" height="17" viewBox="0 0 12 17" fill="none"><path d="M1 1 V12 L3.7 9.6 L5.7 14.4 L7.8 13.4 L5.8 8.8 H9.4 Z" fill="#ffffff" stroke="#222" stroke-width=".8" stroke-linejoin="round"/></svg>
</div>
<div class="rim"></div>
</div>
<div class="b" style="left:617px;top:1px;width:183px;height:54.5px;background:#ffffff;"></div><svg class="b" style="left:617px;top:1px;" width="183" height="54" viewBox="0 0 183 54" fill="none"><path d="M9.25 9.4 H37.4 V16 H26.2 V38.8 H18.5 V16 H9.25 Z" fill="#1380d2"/><path fill-rule="evenodd" d="M48 9.1 A15 15 0 1 0 48 39.1 A15 15 0 1 0 48 9.1 Z M48 16.3 A7.8 7.8 0 1 1 48 31.9 A7.8 7.8 0 1 1 48 16.3 Z" fill="#1380d2"/><path fill-rule="evenodd" d="M65 9.5 H74.8 A13.2 13.2 0 0 1 74.8 35.9 H72.4 V38.4 L65.7 46 H65 Z M72.4 16.2 V29.2 H74.6 A6.5 6.5 0 0 0 74.6 16.2 Z" fill="#1380d2"/><path d="M91 9.5 H111.7 V16 H98.6 V21.6 H110 V27.9 H98.6 V32.9 H111.7 V39.1 H91 Z" fill="#1380d2"/><path fill-rule="evenodd" d="M115.5 9.5 H122.8 A14.6 14.8 0 0 1 122.8 39.1 H115.5 Z M122.75 16 V32.6 H123 A7 8.3 0 0 0 123 16 Z" fill="#1380d2"/><path d="M140.5 9.5 H147.4 V39.1 H140.5 Z" fill="#1380d2"/><path d="M149.25 9.5 H175 V16 H165.75 V39.1 H158.6 V16 H149.25 Z" fill="#1380d2"/></svg>
</div>
</body></html>
